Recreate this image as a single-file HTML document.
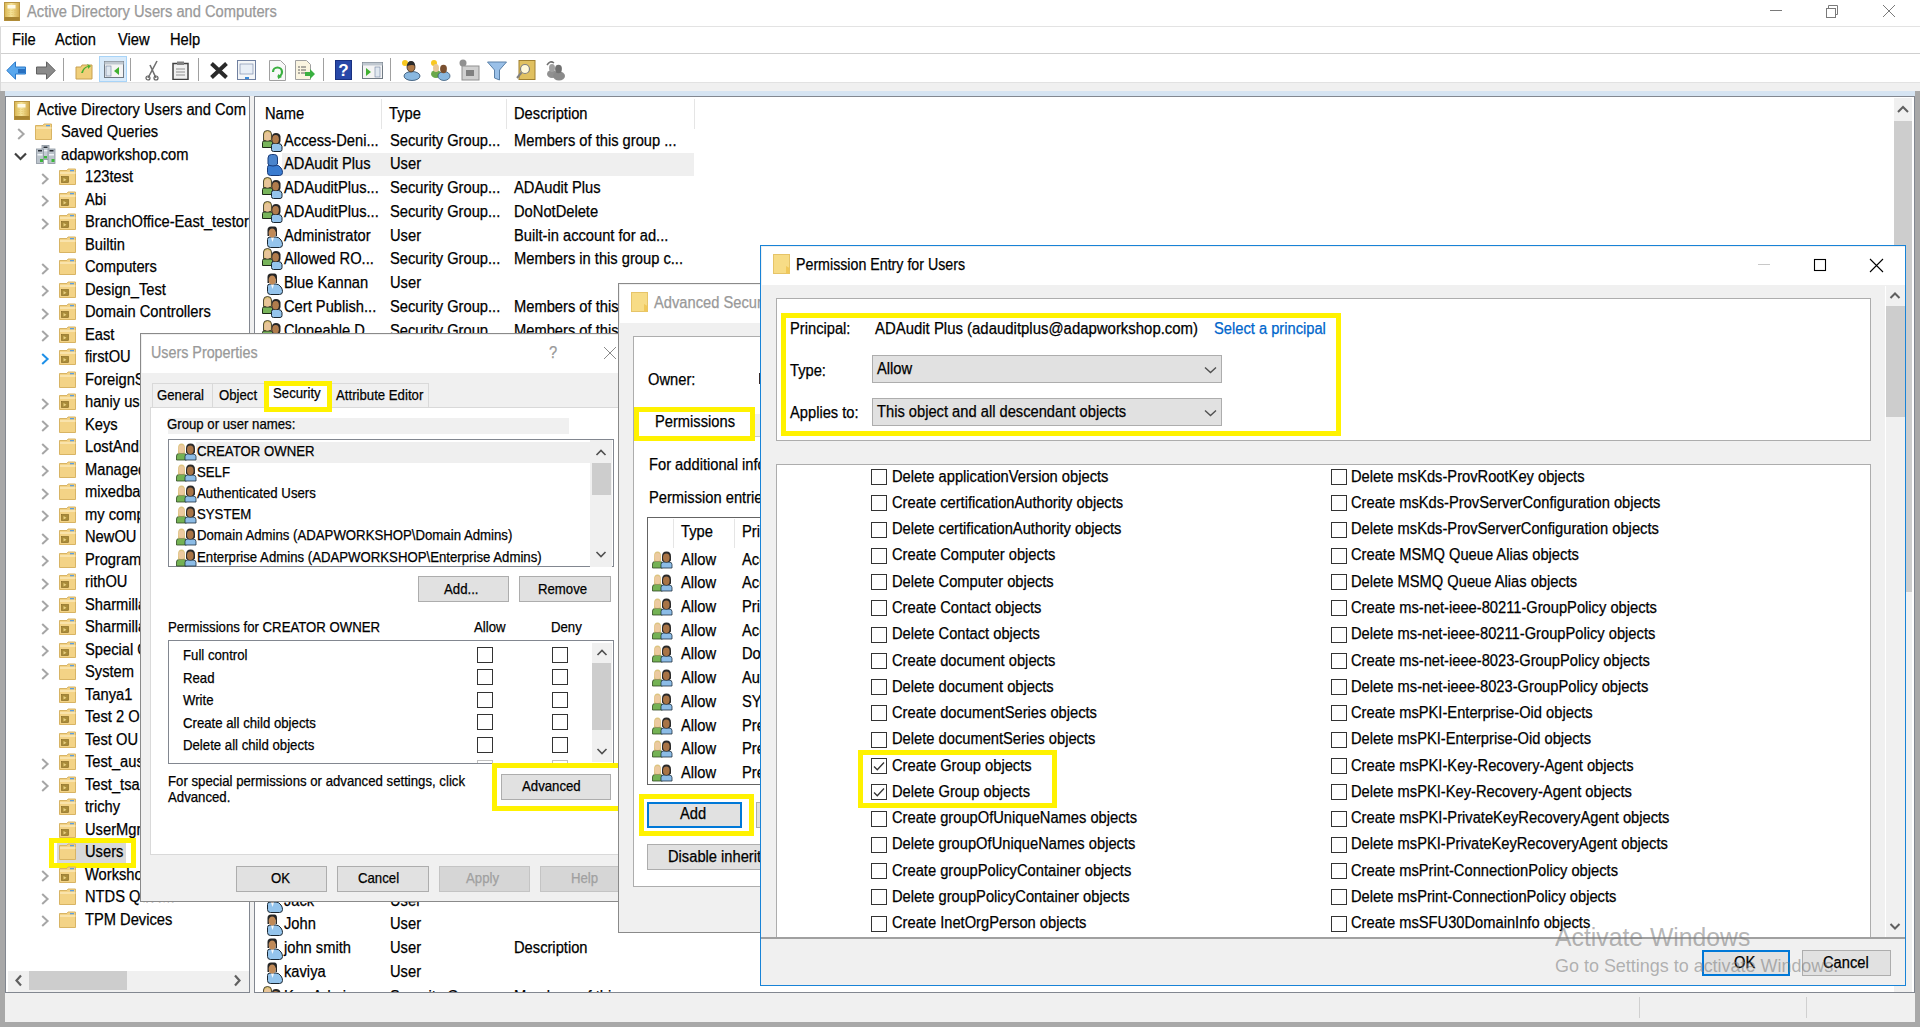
<!DOCTYPE html><html><head><meta charset="utf-8"><style>html,body{margin:0;padding:0;width:1920px;height:1027px;overflow:hidden;background:#fff;position:relative}.t{position:absolute;white-space:nowrap;line-height:20px;height:20px;font-family:"Liberation Sans",sans-serif;transform-origin:0 0;-webkit-text-stroke:0.25px currentColor}svg{display:block}</style></head><body><svg style="position:absolute;left:4px;top:2px;" width="16" height="19" viewBox="0 0 16 19"><defs><linearGradient id="gb" x1="0" x2="1"><stop offset="0" stop-color="#d8b450"/><stop offset="0.45" stop-color="#f6e49a"/><stop offset="1" stop-color="#d0a848"/></linearGradient></defs><rect x="0.5" y="0.5" width="15" height="18" fill="url(#gb)" stroke="#b89440"/><rect x="3.5" y="3" width="8" height="3.5" fill="#fffbe8"/><path d="M5 8v6M8 8v6M11 8v6" stroke="#e0c060" stroke-width="0.8" stroke-dasharray="1 1"/><rect x="0.5" y="15" width="15" height="3.5" fill="#a88430"/></svg><div class="t" style="left:26.70px;top:2.03px;font-size:15.8px;color:#999;transform:scaleX(0.93);">Active Directory Users and Computers</div><div style="position:absolute;left:1770px;top:10px;width:12px;height:1px;background:#7a7a7a"></div><svg style="position:absolute;left:1825px;top:4px;" width="15" height="14" viewBox="0 0 15 14"><rect x="1.5" y="4.5" width="9" height="9" fill="none" stroke="#7a7a7a"/><path d="M3.5 4.5 v-3 h9 v9 h-2" fill="none" stroke="#7a7a7a"/></svg><svg style="position:absolute;left:1882px;top:4px;" width="14" height="14" viewBox="0 0 14 14"><path d="M1 1 L13 13 M13 1 L1 13" stroke="#7a7a7a" stroke-width="1"/></svg><div style="position:absolute;left:0px;top:26px;width:1920px;height:1px;background:#e3e3e3"></div><div style="position:absolute;left:0px;top:27px;width:1px;height:27px;background:#e3e3e3"></div><div class="t" style="left:12.20px;top:30.03px;font-size:15.8px;color:#000;transform:scaleX(0.93);">File</div><div class="t" style="left:54.70px;top:30.03px;font-size:15.8px;color:#000;transform:scaleX(0.93);">Action</div><div class="t" style="left:117.90px;top:30.03px;font-size:15.8px;color:#000;transform:scaleX(0.93);">View</div><div class="t" style="left:169.50px;top:30.03px;font-size:15.8px;color:#000;transform:scaleX(0.93);">Help</div><div style="position:absolute;left:0px;top:53px;width:1920px;height:1px;background:#cfcfcf"></div><div style="position:absolute;left:99px;top:56px;width:28px;height:26px;background:#d8eafa;border:1px solid #a8d4f8;box-sizing:border-box"></div><div style="position:absolute;left:63px;top:58px;width:1px;height:23px;background:#a0a0a0"></div><div style="position:absolute;left:130px;top:58px;width:1px;height:23px;background:#a0a0a0"></div><div style="position:absolute;left:198px;top:58px;width:1px;height:23px;background:#a0a0a0"></div><div style="position:absolute;left:323px;top:58px;width:1px;height:23px;background:#a0a0a0"></div><div style="position:absolute;left:390px;top:58px;width:1px;height:23px;background:#a0a0a0"></div><svg style="position:absolute;left:6px;top:61px;" width="21" height="19" viewBox="0 0 21 19"><path d="M0.8 9.5 L9.5 0.8 V6 H19.5 V13 H9.5 V18.2 Z" fill="#5aa8ee" stroke="#2a78c8" stroke-width="1"/><rect x="12" y="8" width="7" height="4" fill="#2a70c0"/></svg><svg style="position:absolute;left:35px;top:61px;" width="21" height="19" viewBox="0 0 21 19"><path d="M20.2 9.5 L11.5 0.8 V6 H1.5 V13 H11.5 V18.2 Z" fill="#8a8a8a" stroke="#606060" stroke-width="1"/></svg><svg style="position:absolute;left:75px;top:61px;" width="19" height="19" viewBox="0 0 19 19"><path d="M1 6 h5 l1 -2 h10 v14 h-16z" fill="#f0cf7a" stroke="#c8a050"/><path d="M6 12 q2 -6 7 -7 l-1 -2 l4 2 l-3 3 v-2 q-4 1 -5 6z" fill="#4ab030"/></svg><svg style="position:absolute;left:104px;top:61px;" width="20" height="17" viewBox="0 0 20 17"><rect x="0.5" y="0.5" width="19" height="16" fill="#f4f4f4" stroke="#707a84"/><rect x="0.5" y="0.5" width="19" height="3" fill="#c0c8d0"/><rect x="2" y="5" width="5" height="10" fill="#e0e8f0" stroke="#7080a0" stroke-width="0.6"/><path d="M15 6 L10 10 L15 14z" fill="#40b030"/></svg><svg style="position:absolute;left:145px;top:60px;" width="15" height="21" viewBox="0 0 15 21"><path d="M3 18 L12 1 M11 18 L5 5" stroke="#707070" stroke-width="1.6"/><circle cx="3" cy="18" r="2" fill="none" stroke="#606060" stroke-width="1.2"/><circle cx="11" cy="18" r="2" fill="none" stroke="#606060" stroke-width="1.2"/></svg><svg style="position:absolute;left:172px;top:61px;" width="17" height="19" viewBox="0 0 17 19"><rect x="1" y="2.5" width="15" height="16" fill="#f0f0f0" stroke="#404040" stroke-width="1.5"/><rect x="5" y="0.5" width="7" height="3.5" fill="#808080"/><path d="M4 8h9M4 11h9M4 14h9" stroke="#909090"/></svg><svg style="position:absolute;left:209px;top:61px;" width="20" height="19" viewBox="0 0 20 19"><path d="M2.5 2.5 L17.5 16.5 M17.5 2.5 L2.5 16.5" stroke="#2a2a2a" stroke-width="4"/></svg><svg style="position:absolute;left:237px;top:60px;" width="20" height="21" viewBox="0 0 20 21"><rect x="0.5" y="0.5" width="18" height="19" fill="#f4f6f8" stroke="#7080a0"/><rect x="3" y="4" width="13" height="10" fill="#e8eef6" stroke="#8090b0" stroke-width="0.7"/><rect x="8" y="17" width="4" height="2" fill="#3a88d8"/></svg><svg style="position:absolute;left:269px;top:60px;" width="17" height="21" viewBox="0 0 17 21"><path d="M0.5 0.5 h11 l5 5 v15 h-16z" fill="#f8f8f8" stroke="#a0a0a0"/><path d="M4 12 a4.5 4.5 0 1 1 4.5 4.5" fill="none" stroke="#3ab040" stroke-width="2.2"/><path d="M9 14 l4 3 l-4 2z" fill="#3ab040"/></svg><svg style="position:absolute;left:295px;top:60px;" width="21" height="21" viewBox="0 0 21 21"><path d="M0.5 0.5 h11 l4 4 v15 h-15z" fill="#faf4e0" stroke="#a0a0a0"/><path d="M3 7h2M3 10h2M3 13h2M6 7h5M6 10h5M6 13h4" stroke="#606060"/><path d="M10 12 h5 v-3 l5 5 l-5 5 v-3 h-5z" fill="#3ab040"/></svg><svg style="position:absolute;left:335px;top:60px;" width="17" height="20" viewBox="0 0 17 20"><rect x="0.5" y="0.5" width="16" height="19" fill="#2848a8" stroke="#183080"/><text x="8.5" y="16" font-family="Liberation Sans" font-weight="bold" font-size="17" fill="#fff" text-anchor="middle">?</text></svg><svg style="position:absolute;left:362px;top:62px;" width="21" height="17" viewBox="0 0 21 17"><rect x="0.5" y="0.5" width="20" height="16" fill="#f4f4f4" stroke="#707a84"/><rect x="0.5" y="0.5" width="20" height="3" fill="#c0c8d0"/><rect x="13" y="5" width="5" height="10" fill="#e0e8f0" stroke="#7080a0" stroke-width="0.6"/><path d="M4 6 L9 10 L4 14z" fill="#40b030"/></svg><svg style="position:absolute;left:401px;top:59px;" width="20" height="22" viewBox="0 0 20 22"><circle cx="4" cy="4" r="3" fill="#f8c820"/><ellipse cx="11" cy="17" rx="8" ry="4.5" fill="#8ab8e0" stroke="#2a4a6a" stroke-width="0.8"/><ellipse cx="10" cy="8" rx="4" ry="5" fill="#b07a48" stroke="#3a2a1a" stroke-width="0.8"/><path d="M6 7 q0.5 -5 4 -5 q4 0 4 5 q-2 -2 -8 0z" fill="#2a2a2a"/></svg><svg style="position:absolute;left:430px;top:59px;" width="21" height="22" viewBox="0 0 21 22"><circle cx="4" cy="4" r="3" fill="#f8c820"/><ellipse cx="6" cy="15" rx="5" ry="4" fill="#6aa84a"/><ellipse cx="6" cy="9" rx="3" ry="4" fill="#e8c898"/><ellipse cx="14" cy="17" rx="6" ry="4.5" fill="#8ab8e0" stroke="#2a4a6a" stroke-width="0.7"/><ellipse cx="13.5" cy="10" rx="3.4" ry="4.2" fill="#7a5030"/></svg><svg style="position:absolute;left:459px;top:59px;" width="21" height="22" viewBox="0 0 21 22"><circle cx="4" cy="4" r="3.5" fill="#909090"/><rect x="3" y="7" width="17" height="14" fill="#d0d0d0" stroke="#909090"/><rect x="7" y="11" width="8" height="6" fill="#808080"/></svg><svg style="position:absolute;left:487px;top:61px;" width="20" height="20" viewBox="0 0 20 20"><path d="M0.5 1 h19 l-7 8 v10 l-5 -2 v-8z" fill="#9ac0e8" stroke="#5a80a8"/></svg><svg style="position:absolute;left:516px;top:60px;" width="20" height="21" viewBox="0 0 20 21"><rect x="3" y="0.5" width="16" height="19" fill="#e0c060" stroke="#a08030"/><circle cx="9" cy="9" r="4.5" fill="#fff8d8" stroke="#808080" stroke-width="1.2"/><path d="M5.5 12.5 L1 18" stroke="#808080" stroke-width="2"/></svg><svg style="position:absolute;left:545px;top:59px;" width="21" height="22" viewBox="0 0 21 22"><path d="M2 6 q3 -5 7 -2" fill="none" stroke="#707070" stroke-width="1.5"/><ellipse cx="7" cy="15" rx="5" ry="4" fill="#909090"/><ellipse cx="7" cy="9" rx="3" ry="4" fill="#a0a0a0"/><ellipse cx="14" cy="17" rx="6" ry="4.5" fill="#8a8a8a"/><ellipse cx="13.5" cy="10" rx="3.4" ry="4.2" fill="#707070"/></svg><div style="position:absolute;left:0px;top:82px;width:1920px;height:9px;background:#f0f0f0"></div><div style="position:absolute;left:0px;top:82px;width:1920px;height:1px;background:#e2e2e2"></div><div style="position:absolute;left:0px;top:27px;width:1px;height:64px;background:#d9d9d9"></div><div style="position:absolute;left:0px;top:91px;width:1920px;height:5px;background:#d6e4f2"></div><div style="position:absolute;left:0px;top:91px;width:5px;height:936px;background:#a8a8a8"></div><div style="position:absolute;left:1915px;top:91px;width:5px;height:936px;background:#a8a8a8"></div><div style="position:absolute;left:0px;top:1022px;width:1920px;height:5px;background:#a8a8a8"></div><div style="position:absolute;left:5px;top:96px;width:1910px;height:926px;background:#f0f0f0"></div><div style="position:absolute;left:1639px;top:997px;width:1px;height:21px;background:#d0d0d0"></div><div style="position:absolute;left:1806px;top:997px;width:1px;height:21px;background:#d0d0d0"></div><div style="position:absolute;left:5px;top:96px;width:245px;height:897px;overflow:hidden;background:#fff;border:1px solid #828790;box-sizing:border-box"><svg style="position:absolute;left:8px;top:4px;" width="16" height="19" viewBox="0 0 16 19"><defs><linearGradient id="gb" x1="0" x2="1"><stop offset="0" stop-color="#d8b450"/><stop offset="0.45" stop-color="#f6e49a"/><stop offset="1" stop-color="#d0a848"/></linearGradient></defs><rect x="0.5" y="0.5" width="15" height="18" fill="url(#gb)" stroke="#b89440"/><rect x="3.5" y="3" width="8" height="3.5" fill="#fffbe8"/><path d="M5 8v6M8 8v6M11 8v6" stroke="#e0c060" stroke-width="0.8" stroke-dasharray="1 1"/><rect x="0.5" y="15" width="15" height="3.5" fill="#a88430"/></svg><div class="t" style="left:31.20px;top:2.73px;font-size:15.8px;color:#000;transform:scaleX(0.93);">Active Directory Users and Com</div><svg style="position:absolute;left:10.5px;top:30.69999999999999px;" width="9" height="12" viewBox="0 0 9 12"><path d="M1.2 1 L6.6 6 L1.2 11" fill="none" stroke="#a6a6a6" stroke-width="2"/></svg><svg style="position:absolute;left:29px;top:26.19999999999999px;" width="17" height="17" viewBox="0 0 17 17"><path d="M0.5 2.5 h7.5 l1 -1.5 h7.5 v15.5 h-16 z" fill="#f3d386" stroke="#d8b464" stroke-width="1"/><path d="M1 5 h15.5" stroke="#fbe9b8" stroke-width="1.5"/><rect x="11" y="2" width="4" height="1.3" fill="#5c9ee0"/></svg><div class="t" style="left:54.70px;top:25.23px;font-size:15.8px;color:#000;transform:scaleX(0.93);">Saved Queries</div><svg style="position:absolute;left:8.0px;top:54.69999999999999px;" width="13" height="9" viewBox="0 0 13 9"><path d="M1 1.5 L6.5 7 L12 1.5" fill="none" stroke="#404040" stroke-width="2.2"/></svg><svg style="position:absolute;left:30px;top:47.69999999999999px;" width="20" height="19" viewBox="0 0 20 19"><rect x="6" y="0.5" width="7" height="14" fill="#c4ccd4" stroke="#8a949e" stroke-width="0.8"/><rect x="7.5" y="1.5" width="4" height="1.5" fill="#2a3038"/><rect x="7" y="5" width="5" height="1.3" fill="#f0f4f8"/><rect x="0.5" y="4" width="7" height="14.5" fill="#bcc4cc" stroke="#8a949e" stroke-width="0.8"/><rect x="12" y="4" width="7" height="14.5" fill="#bcc4cc" stroke="#8a949e" stroke-width="0.8"/><rect x="2" y="5" width="4" height="1.5" fill="#2a3038"/><rect x="13.5" y="5" width="4" height="1.5" fill="#2a3038"/><rect x="1.5" y="9" width="5" height="1.5" fill="#f0f4f8"/><rect x="13" y="9" width="5" height="1.5" fill="#f0f4f8"/><rect x="4" y="14" width="3" height="3" fill="#3cb83c"/><rect x="15.5" y="14" width="3" height="3" fill="#3cb83c"/><rect x="8" y="11" width="3" height="2.5" fill="#3cb83c"/></svg><div class="t" style="left:54.70px;top:47.73px;font-size:15.8px;color:#000;transform:scaleX(0.93);">adapworkshop.com</div><svg style="position:absolute;left:34.5px;top:75.69999999999999px;" width="9" height="12" viewBox="0 0 9 12"><path d="M1.2 1 L6.6 6 L1.2 11" fill="none" stroke="#a6a6a6" stroke-width="2"/></svg><svg style="position:absolute;left:53px;top:71.19999999999999px;" width="17" height="17" viewBox="0 0 17 17"><path d="M0.5 2.5 h7.5 l1 -1.5 h7.5 v15.5 h-16 z" fill="#f3d386" stroke="#d8b464" stroke-width="1"/><path d="M1 5 h15.5" stroke="#fbe9b8" stroke-width="1.5"/><rect x="11" y="2" width="4" height="1.3" fill="#5c9ee0"/><rect x="2.5" y="8.5" width="7" height="6" fill="#a88a38" stroke="#806420" stroke-width="0.6"/><path d="M4.5 10 l3 1.8 l-3 1.8z" fill="#e8d080"/></svg><div class="t" style="left:78.70px;top:70.23px;font-size:15.8px;color:#000;transform:scaleX(0.93);">123test</div><svg style="position:absolute;left:34.5px;top:98.19999999999999px;" width="9" height="12" viewBox="0 0 9 12"><path d="M1.2 1 L6.6 6 L1.2 11" fill="none" stroke="#a6a6a6" stroke-width="2"/></svg><svg style="position:absolute;left:53px;top:93.69999999999999px;" width="17" height="17" viewBox="0 0 17 17"><path d="M0.5 2.5 h7.5 l1 -1.5 h7.5 v15.5 h-16 z" fill="#f3d386" stroke="#d8b464" stroke-width="1"/><path d="M1 5 h15.5" stroke="#fbe9b8" stroke-width="1.5"/><rect x="11" y="2" width="4" height="1.3" fill="#5c9ee0"/><rect x="2.5" y="8.5" width="7" height="6" fill="#a88a38" stroke="#806420" stroke-width="0.6"/><path d="M4.5 10 l3 1.8 l-3 1.8z" fill="#e8d080"/></svg><div class="t" style="left:78.70px;top:92.73px;font-size:15.8px;color:#000;transform:scaleX(0.93);">Abi</div><svg style="position:absolute;left:34.5px;top:120.69999999999999px;" width="9" height="12" viewBox="0 0 9 12"><path d="M1.2 1 L6.6 6 L1.2 11" fill="none" stroke="#a6a6a6" stroke-width="2"/></svg><svg style="position:absolute;left:53px;top:116.19999999999999px;" width="17" height="17" viewBox="0 0 17 17"><path d="M0.5 2.5 h7.5 l1 -1.5 h7.5 v15.5 h-16 z" fill="#f3d386" stroke="#d8b464" stroke-width="1"/><path d="M1 5 h15.5" stroke="#fbe9b8" stroke-width="1.5"/><rect x="11" y="2" width="4" height="1.3" fill="#5c9ee0"/><rect x="2.5" y="8.5" width="7" height="6" fill="#a88a38" stroke="#806420" stroke-width="0.6"/><path d="M4.5 10 l3 1.8 l-3 1.8z" fill="#e8d080"/></svg><div class="t" style="left:78.70px;top:115.23px;font-size:15.8px;color:#000;transform:scaleX(0.93);">BranchOffice-East_testor</div><svg style="position:absolute;left:53px;top:138.7px;" width="17" height="17" viewBox="0 0 17 17"><path d="M0.5 2.5 h7.5 l1 -1.5 h7.5 v15.5 h-16 z" fill="#f3d386" stroke="#d8b464" stroke-width="1"/><path d="M1 5 h15.5" stroke="#fbe9b8" stroke-width="1.5"/><rect x="11" y="2" width="4" height="1.3" fill="#5c9ee0"/></svg><div class="t" style="left:78.70px;top:137.73px;font-size:15.8px;color:#000;transform:scaleX(0.93);">Builtin</div><svg style="position:absolute;left:34.5px;top:165.7px;" width="9" height="12" viewBox="0 0 9 12"><path d="M1.2 1 L6.6 6 L1.2 11" fill="none" stroke="#a6a6a6" stroke-width="2"/></svg><svg style="position:absolute;left:53px;top:161.2px;" width="17" height="17" viewBox="0 0 17 17"><path d="M0.5 2.5 h7.5 l1 -1.5 h7.5 v15.5 h-16 z" fill="#f3d386" stroke="#d8b464" stroke-width="1"/><path d="M1 5 h15.5" stroke="#fbe9b8" stroke-width="1.5"/><rect x="11" y="2" width="4" height="1.3" fill="#5c9ee0"/></svg><div class="t" style="left:78.70px;top:160.23px;font-size:15.8px;color:#000;transform:scaleX(0.93);">Computers</div><svg style="position:absolute;left:34.5px;top:188.2px;" width="9" height="12" viewBox="0 0 9 12"><path d="M1.2 1 L6.6 6 L1.2 11" fill="none" stroke="#a6a6a6" stroke-width="2"/></svg><svg style="position:absolute;left:53px;top:183.7px;" width="17" height="17" viewBox="0 0 17 17"><path d="M0.5 2.5 h7.5 l1 -1.5 h7.5 v15.5 h-16 z" fill="#f3d386" stroke="#d8b464" stroke-width="1"/><path d="M1 5 h15.5" stroke="#fbe9b8" stroke-width="1.5"/><rect x="11" y="2" width="4" height="1.3" fill="#5c9ee0"/><rect x="2.5" y="8.5" width="7" height="6" fill="#a88a38" stroke="#806420" stroke-width="0.6"/><path d="M4.5 10 l3 1.8 l-3 1.8z" fill="#e8d080"/></svg><div class="t" style="left:78.70px;top:182.73px;font-size:15.8px;color:#000;transform:scaleX(0.93);">Design_Test</div><svg style="position:absolute;left:34.5px;top:210.7px;" width="9" height="12" viewBox="0 0 9 12"><path d="M1.2 1 L6.6 6 L1.2 11" fill="none" stroke="#a6a6a6" stroke-width="2"/></svg><svg style="position:absolute;left:53px;top:206.2px;" width="17" height="17" viewBox="0 0 17 17"><path d="M0.5 2.5 h7.5 l1 -1.5 h7.5 v15.5 h-16 z" fill="#f3d386" stroke="#d8b464" stroke-width="1"/><path d="M1 5 h15.5" stroke="#fbe9b8" stroke-width="1.5"/><rect x="11" y="2" width="4" height="1.3" fill="#5c9ee0"/><rect x="2.5" y="8.5" width="7" height="6" fill="#a88a38" stroke="#806420" stroke-width="0.6"/><path d="M4.5 10 l3 1.8 l-3 1.8z" fill="#e8d080"/></svg><div class="t" style="left:78.70px;top:205.23px;font-size:15.8px;color:#000;transform:scaleX(0.93);">Domain Controllers</div><svg style="position:absolute;left:34.5px;top:233.2px;" width="9" height="12" viewBox="0 0 9 12"><path d="M1.2 1 L6.6 6 L1.2 11" fill="none" stroke="#a6a6a6" stroke-width="2"/></svg><svg style="position:absolute;left:53px;top:228.7px;" width="17" height="17" viewBox="0 0 17 17"><path d="M0.5 2.5 h7.5 l1 -1.5 h7.5 v15.5 h-16 z" fill="#f3d386" stroke="#d8b464" stroke-width="1"/><path d="M1 5 h15.5" stroke="#fbe9b8" stroke-width="1.5"/><rect x="11" y="2" width="4" height="1.3" fill="#5c9ee0"/><rect x="2.5" y="8.5" width="7" height="6" fill="#a88a38" stroke="#806420" stroke-width="0.6"/><path d="M4.5 10 l3 1.8 l-3 1.8z" fill="#e8d080"/></svg><div class="t" style="left:78.70px;top:227.73px;font-size:15.8px;color:#000;transform:scaleX(0.93);">East</div><svg style="position:absolute;left:34.5px;top:255.7px;" width="9" height="12" viewBox="0 0 9 12"><path d="M1.2 1 L6.6 6 L1.2 11" fill="none" stroke="#1e90e8" stroke-width="2"/></svg><svg style="position:absolute;left:53px;top:251.2px;" width="17" height="17" viewBox="0 0 17 17"><path d="M0.5 2.5 h7.5 l1 -1.5 h7.5 v15.5 h-16 z" fill="#f3d386" stroke="#d8b464" stroke-width="1"/><path d="M1 5 h15.5" stroke="#fbe9b8" stroke-width="1.5"/><rect x="11" y="2" width="4" height="1.3" fill="#5c9ee0"/><rect x="2.5" y="8.5" width="7" height="6" fill="#a88a38" stroke="#806420" stroke-width="0.6"/><path d="M4.5 10 l3 1.8 l-3 1.8z" fill="#e8d080"/></svg><div class="t" style="left:78.70px;top:250.23px;font-size:15.8px;color:#000;transform:scaleX(0.93);">firstOU</div><svg style="position:absolute;left:53px;top:273.7px;" width="17" height="17" viewBox="0 0 17 17"><path d="M0.5 2.5 h7.5 l1 -1.5 h7.5 v15.5 h-16 z" fill="#f3d386" stroke="#d8b464" stroke-width="1"/><path d="M1 5 h15.5" stroke="#fbe9b8" stroke-width="1.5"/><rect x="11" y="2" width="4" height="1.3" fill="#5c9ee0"/></svg><div class="t" style="left:78.70px;top:272.73px;font-size:15.8px;color:#000;transform:scaleX(0.93);">ForeignSecurityPrincipals</div><svg style="position:absolute;left:34.5px;top:300.7px;" width="9" height="12" viewBox="0 0 9 12"><path d="M1.2 1 L6.6 6 L1.2 11" fill="none" stroke="#a6a6a6" stroke-width="2"/></svg><svg style="position:absolute;left:53px;top:296.2px;" width="17" height="17" viewBox="0 0 17 17"><path d="M0.5 2.5 h7.5 l1 -1.5 h7.5 v15.5 h-16 z" fill="#f3d386" stroke="#d8b464" stroke-width="1"/><path d="M1 5 h15.5" stroke="#fbe9b8" stroke-width="1.5"/><rect x="11" y="2" width="4" height="1.3" fill="#5c9ee0"/><rect x="2.5" y="8.5" width="7" height="6" fill="#a88a38" stroke="#806420" stroke-width="0.6"/><path d="M4.5 10 l3 1.8 l-3 1.8z" fill="#e8d080"/></svg><div class="t" style="left:78.70px;top:295.23px;font-size:15.8px;color:#000;transform:scaleX(0.93);">haniy users</div><svg style="position:absolute;left:34.5px;top:323.2px;" width="9" height="12" viewBox="0 0 9 12"><path d="M1.2 1 L6.6 6 L1.2 11" fill="none" stroke="#a6a6a6" stroke-width="2"/></svg><svg style="position:absolute;left:53px;top:318.7px;" width="17" height="17" viewBox="0 0 17 17"><path d="M0.5 2.5 h7.5 l1 -1.5 h7.5 v15.5 h-16 z" fill="#f3d386" stroke="#d8b464" stroke-width="1"/><path d="M1 5 h15.5" stroke="#fbe9b8" stroke-width="1.5"/><rect x="11" y="2" width="4" height="1.3" fill="#5c9ee0"/></svg><div class="t" style="left:78.70px;top:317.73px;font-size:15.8px;color:#000;transform:scaleX(0.93);">Keys</div><svg style="position:absolute;left:34.5px;top:345.7px;" width="9" height="12" viewBox="0 0 9 12"><path d="M1.2 1 L6.6 6 L1.2 11" fill="none" stroke="#a6a6a6" stroke-width="2"/></svg><svg style="position:absolute;left:53px;top:341.2px;" width="17" height="17" viewBox="0 0 17 17"><path d="M0.5 2.5 h7.5 l1 -1.5 h7.5 v15.5 h-16 z" fill="#f3d386" stroke="#d8b464" stroke-width="1"/><path d="M1 5 h15.5" stroke="#fbe9b8" stroke-width="1.5"/><rect x="11" y="2" width="4" height="1.3" fill="#5c9ee0"/></svg><div class="t" style="left:78.70px;top:340.23px;font-size:15.8px;color:#000;transform:scaleX(0.93);">LostAndFound</div><svg style="position:absolute;left:34.5px;top:368.2px;" width="9" height="12" viewBox="0 0 9 12"><path d="M1.2 1 L6.6 6 L1.2 11" fill="none" stroke="#a6a6a6" stroke-width="2"/></svg><svg style="position:absolute;left:53px;top:363.7px;" width="17" height="17" viewBox="0 0 17 17"><path d="M0.5 2.5 h7.5 l1 -1.5 h7.5 v15.5 h-16 z" fill="#f3d386" stroke="#d8b464" stroke-width="1"/><path d="M1 5 h15.5" stroke="#fbe9b8" stroke-width="1.5"/><rect x="11" y="2" width="4" height="1.3" fill="#5c9ee0"/></svg><div class="t" style="left:78.70px;top:362.73px;font-size:15.8px;color:#000;transform:scaleX(0.93);">Managed Service Accounts</div><svg style="position:absolute;left:34.5px;top:390.7px;" width="9" height="12" viewBox="0 0 9 12"><path d="M1.2 1 L6.6 6 L1.2 11" fill="none" stroke="#a6a6a6" stroke-width="2"/></svg><svg style="position:absolute;left:53px;top:386.2px;" width="17" height="17" viewBox="0 0 17 17"><path d="M0.5 2.5 h7.5 l1 -1.5 h7.5 v15.5 h-16 z" fill="#f3d386" stroke="#d8b464" stroke-width="1"/><path d="M1 5 h15.5" stroke="#fbe9b8" stroke-width="1.5"/><rect x="11" y="2" width="4" height="1.3" fill="#5c9ee0"/></svg><div class="t" style="left:78.70px;top:385.23px;font-size:15.8px;color:#000;transform:scaleX(0.93);">mixedbag</div><svg style="position:absolute;left:34.5px;top:413.20000000000005px;" width="9" height="12" viewBox="0 0 9 12"><path d="M1.2 1 L6.6 6 L1.2 11" fill="none" stroke="#a6a6a6" stroke-width="2"/></svg><svg style="position:absolute;left:53px;top:408.70000000000005px;" width="17" height="17" viewBox="0 0 17 17"><path d="M0.5 2.5 h7.5 l1 -1.5 h7.5 v15.5 h-16 z" fill="#f3d386" stroke="#d8b464" stroke-width="1"/><path d="M1 5 h15.5" stroke="#fbe9b8" stroke-width="1.5"/><rect x="11" y="2" width="4" height="1.3" fill="#5c9ee0"/><rect x="2.5" y="8.5" width="7" height="6" fill="#a88a38" stroke="#806420" stroke-width="0.6"/><path d="M4.5 10 l3 1.8 l-3 1.8z" fill="#e8d080"/></svg><div class="t" style="left:78.70px;top:407.73px;font-size:15.8px;color:#000;transform:scaleX(0.93);">my computers</div><svg style="position:absolute;left:34.5px;top:435.70000000000005px;" width="9" height="12" viewBox="0 0 9 12"><path d="M1.2 1 L6.6 6 L1.2 11" fill="none" stroke="#a6a6a6" stroke-width="2"/></svg><svg style="position:absolute;left:53px;top:431.20000000000005px;" width="17" height="17" viewBox="0 0 17 17"><path d="M0.5 2.5 h7.5 l1 -1.5 h7.5 v15.5 h-16 z" fill="#f3d386" stroke="#d8b464" stroke-width="1"/><path d="M1 5 h15.5" stroke="#fbe9b8" stroke-width="1.5"/><rect x="11" y="2" width="4" height="1.3" fill="#5c9ee0"/><rect x="2.5" y="8.5" width="7" height="6" fill="#a88a38" stroke="#806420" stroke-width="0.6"/><path d="M4.5 10 l3 1.8 l-3 1.8z" fill="#e8d080"/></svg><div class="t" style="left:78.70px;top:430.23px;font-size:15.8px;color:#000;transform:scaleX(0.93);">NewOU</div><svg style="position:absolute;left:34.5px;top:458.20000000000005px;" width="9" height="12" viewBox="0 0 9 12"><path d="M1.2 1 L6.6 6 L1.2 11" fill="none" stroke="#a6a6a6" stroke-width="2"/></svg><svg style="position:absolute;left:53px;top:453.70000000000005px;" width="17" height="17" viewBox="0 0 17 17"><path d="M0.5 2.5 h7.5 l1 -1.5 h7.5 v15.5 h-16 z" fill="#f3d386" stroke="#d8b464" stroke-width="1"/><path d="M1 5 h15.5" stroke="#fbe9b8" stroke-width="1.5"/><rect x="11" y="2" width="4" height="1.3" fill="#5c9ee0"/></svg><div class="t" style="left:78.70px;top:452.73px;font-size:15.8px;color:#000;transform:scaleX(0.93);">Program Data</div><svg style="position:absolute;left:34.5px;top:480.70000000000005px;" width="9" height="12" viewBox="0 0 9 12"><path d="M1.2 1 L6.6 6 L1.2 11" fill="none" stroke="#a6a6a6" stroke-width="2"/></svg><svg style="position:absolute;left:53px;top:476.20000000000005px;" width="17" height="17" viewBox="0 0 17 17"><path d="M0.5 2.5 h7.5 l1 -1.5 h7.5 v15.5 h-16 z" fill="#f3d386" stroke="#d8b464" stroke-width="1"/><path d="M1 5 h15.5" stroke="#fbe9b8" stroke-width="1.5"/><rect x="11" y="2" width="4" height="1.3" fill="#5c9ee0"/><rect x="2.5" y="8.5" width="7" height="6" fill="#a88a38" stroke="#806420" stroke-width="0.6"/><path d="M4.5 10 l3 1.8 l-3 1.8z" fill="#e8d080"/></svg><div class="t" style="left:78.70px;top:475.23px;font-size:15.8px;color:#000;transform:scaleX(0.93);">rithOU</div><svg style="position:absolute;left:34.5px;top:503.20000000000005px;" width="9" height="12" viewBox="0 0 9 12"><path d="M1.2 1 L6.6 6 L1.2 11" fill="none" stroke="#a6a6a6" stroke-width="2"/></svg><svg style="position:absolute;left:53px;top:498.70000000000005px;" width="17" height="17" viewBox="0 0 17 17"><path d="M0.5 2.5 h7.5 l1 -1.5 h7.5 v15.5 h-16 z" fill="#f3d386" stroke="#d8b464" stroke-width="1"/><path d="M1 5 h15.5" stroke="#fbe9b8" stroke-width="1.5"/><rect x="11" y="2" width="4" height="1.3" fill="#5c9ee0"/><rect x="2.5" y="8.5" width="7" height="6" fill="#a88a38" stroke="#806420" stroke-width="0.6"/><path d="M4.5 10 l3 1.8 l-3 1.8z" fill="#e8d080"/></svg><div class="t" style="left:78.70px;top:497.73px;font-size:15.8px;color:#000;transform:scaleX(0.93);">Sharmilla</div><svg style="position:absolute;left:34.5px;top:525.7px;" width="9" height="12" viewBox="0 0 9 12"><path d="M1.2 1 L6.6 6 L1.2 11" fill="none" stroke="#a6a6a6" stroke-width="2"/></svg><svg style="position:absolute;left:53px;top:521.2px;" width="17" height="17" viewBox="0 0 17 17"><path d="M0.5 2.5 h7.5 l1 -1.5 h7.5 v15.5 h-16 z" fill="#f3d386" stroke="#d8b464" stroke-width="1"/><path d="M1 5 h15.5" stroke="#fbe9b8" stroke-width="1.5"/><rect x="11" y="2" width="4" height="1.3" fill="#5c9ee0"/><rect x="2.5" y="8.5" width="7" height="6" fill="#a88a38" stroke="#806420" stroke-width="0.6"/><path d="M4.5 10 l3 1.8 l-3 1.8z" fill="#e8d080"/></svg><div class="t" style="left:78.70px;top:520.23px;font-size:15.8px;color:#000;transform:scaleX(0.93);">Sharmilla2</div><svg style="position:absolute;left:34.5px;top:548.2px;" width="9" height="12" viewBox="0 0 9 12"><path d="M1.2 1 L6.6 6 L1.2 11" fill="none" stroke="#a6a6a6" stroke-width="2"/></svg><svg style="position:absolute;left:53px;top:543.7px;" width="17" height="17" viewBox="0 0 17 17"><path d="M0.5 2.5 h7.5 l1 -1.5 h7.5 v15.5 h-16 z" fill="#f3d386" stroke="#d8b464" stroke-width="1"/><path d="M1 5 h15.5" stroke="#fbe9b8" stroke-width="1.5"/><rect x="11" y="2" width="4" height="1.3" fill="#5c9ee0"/><rect x="2.5" y="8.5" width="7" height="6" fill="#a88a38" stroke="#806420" stroke-width="0.6"/><path d="M4.5 10 l3 1.8 l-3 1.8z" fill="#e8d080"/></svg><div class="t" style="left:78.70px;top:542.73px;font-size:15.8px;color:#000;transform:scaleX(0.93);">Special OU</div><svg style="position:absolute;left:34.5px;top:570.7px;" width="9" height="12" viewBox="0 0 9 12"><path d="M1.2 1 L6.6 6 L1.2 11" fill="none" stroke="#a6a6a6" stroke-width="2"/></svg><svg style="position:absolute;left:53px;top:566.2px;" width="17" height="17" viewBox="0 0 17 17"><path d="M0.5 2.5 h7.5 l1 -1.5 h7.5 v15.5 h-16 z" fill="#f3d386" stroke="#d8b464" stroke-width="1"/><path d="M1 5 h15.5" stroke="#fbe9b8" stroke-width="1.5"/><rect x="11" y="2" width="4" height="1.3" fill="#5c9ee0"/></svg><div class="t" style="left:78.70px;top:565.23px;font-size:15.8px;color:#000;transform:scaleX(0.93);">System</div><svg style="position:absolute;left:53px;top:588.7px;" width="17" height="17" viewBox="0 0 17 17"><path d="M0.5 2.5 h7.5 l1 -1.5 h7.5 v15.5 h-16 z" fill="#f3d386" stroke="#d8b464" stroke-width="1"/><path d="M1 5 h15.5" stroke="#fbe9b8" stroke-width="1.5"/><rect x="11" y="2" width="4" height="1.3" fill="#5c9ee0"/><rect x="2.5" y="8.5" width="7" height="6" fill="#a88a38" stroke="#806420" stroke-width="0.6"/><path d="M4.5 10 l3 1.8 l-3 1.8z" fill="#e8d080"/></svg><div class="t" style="left:78.70px;top:587.73px;font-size:15.8px;color:#000;transform:scaleX(0.93);">Tanya1</div><svg style="position:absolute;left:53px;top:611.2px;" width="17" height="17" viewBox="0 0 17 17"><path d="M0.5 2.5 h7.5 l1 -1.5 h7.5 v15.5 h-16 z" fill="#f3d386" stroke="#d8b464" stroke-width="1"/><path d="M1 5 h15.5" stroke="#fbe9b8" stroke-width="1.5"/><rect x="11" y="2" width="4" height="1.3" fill="#5c9ee0"/><rect x="2.5" y="8.5" width="7" height="6" fill="#a88a38" stroke="#806420" stroke-width="0.6"/><path d="M4.5 10 l3 1.8 l-3 1.8z" fill="#e8d080"/></svg><div class="t" style="left:78.70px;top:610.23px;font-size:15.8px;color:#000;transform:scaleX(0.93);">Test 2 OU</div><svg style="position:absolute;left:53px;top:633.7px;" width="17" height="17" viewBox="0 0 17 17"><path d="M0.5 2.5 h7.5 l1 -1.5 h7.5 v15.5 h-16 z" fill="#f3d386" stroke="#d8b464" stroke-width="1"/><path d="M1 5 h15.5" stroke="#fbe9b8" stroke-width="1.5"/><rect x="11" y="2" width="4" height="1.3" fill="#5c9ee0"/><rect x="2.5" y="8.5" width="7" height="6" fill="#a88a38" stroke="#806420" stroke-width="0.6"/><path d="M4.5 10 l3 1.8 l-3 1.8z" fill="#e8d080"/></svg><div class="t" style="left:78.70px;top:632.73px;font-size:15.8px;color:#000;transform:scaleX(0.93);">Test OU</div><svg style="position:absolute;left:34.5px;top:660.7px;" width="9" height="12" viewBox="0 0 9 12"><path d="M1.2 1 L6.6 6 L1.2 11" fill="none" stroke="#a6a6a6" stroke-width="2"/></svg><svg style="position:absolute;left:53px;top:656.2px;" width="17" height="17" viewBox="0 0 17 17"><path d="M0.5 2.5 h7.5 l1 -1.5 h7.5 v15.5 h-16 z" fill="#f3d386" stroke="#d8b464" stroke-width="1"/><path d="M1 5 h15.5" stroke="#fbe9b8" stroke-width="1.5"/><rect x="11" y="2" width="4" height="1.3" fill="#5c9ee0"/><rect x="2.5" y="8.5" width="7" height="6" fill="#a88a38" stroke="#806420" stroke-width="0.6"/><path d="M4.5 10 l3 1.8 l-3 1.8z" fill="#e8d080"/></svg><div class="t" style="left:78.70px;top:655.23px;font-size:15.8px;color:#000;transform:scaleX(0.93);">Test_aus</div><svg style="position:absolute;left:34.5px;top:683.2px;" width="9" height="12" viewBox="0 0 9 12"><path d="M1.2 1 L6.6 6 L1.2 11" fill="none" stroke="#a6a6a6" stroke-width="2"/></svg><svg style="position:absolute;left:53px;top:678.7px;" width="17" height="17" viewBox="0 0 17 17"><path d="M0.5 2.5 h7.5 l1 -1.5 h7.5 v15.5 h-16 z" fill="#f3d386" stroke="#d8b464" stroke-width="1"/><path d="M1 5 h15.5" stroke="#fbe9b8" stroke-width="1.5"/><rect x="11" y="2" width="4" height="1.3" fill="#5c9ee0"/><rect x="2.5" y="8.5" width="7" height="6" fill="#a88a38" stroke="#806420" stroke-width="0.6"/><path d="M4.5 10 l3 1.8 l-3 1.8z" fill="#e8d080"/></svg><div class="t" style="left:78.70px;top:677.73px;font-size:15.8px;color:#000;transform:scaleX(0.93);">Test_tsa</div><svg style="position:absolute;left:53px;top:701.2px;" width="17" height="17" viewBox="0 0 17 17"><path d="M0.5 2.5 h7.5 l1 -1.5 h7.5 v15.5 h-16 z" fill="#f3d386" stroke="#d8b464" stroke-width="1"/><path d="M1 5 h15.5" stroke="#fbe9b8" stroke-width="1.5"/><rect x="11" y="2" width="4" height="1.3" fill="#5c9ee0"/><rect x="2.5" y="8.5" width="7" height="6" fill="#a88a38" stroke="#806420" stroke-width="0.6"/><path d="M4.5 10 l3 1.8 l-3 1.8z" fill="#e8d080"/></svg><div class="t" style="left:78.70px;top:700.23px;font-size:15.8px;color:#000;transform:scaleX(0.93);">trichy</div><svg style="position:absolute;left:53px;top:723.7px;" width="17" height="17" viewBox="0 0 17 17"><path d="M0.5 2.5 h7.5 l1 -1.5 h7.5 v15.5 h-16 z" fill="#f3d386" stroke="#d8b464" stroke-width="1"/><path d="M1 5 h15.5" stroke="#fbe9b8" stroke-width="1.5"/><rect x="11" y="2" width="4" height="1.3" fill="#5c9ee0"/><rect x="2.5" y="8.5" width="7" height="6" fill="#a88a38" stroke="#806420" stroke-width="0.6"/><path d="M4.5 10 l3 1.8 l-3 1.8z" fill="#e8d080"/></svg><div class="t" style="left:78.70px;top:722.73px;font-size:15.8px;color:#000;transform:scaleX(0.93);">UserMgmt</div><div style="position:absolute;left:43px;top:741px;width:87px;height:30px;background:#fff200"></div><div style="position:absolute;left:48px;top:746px;width:77px;height:20px;background:#fff"></div><div style="position:absolute;left:51px;top:746px;width:69px;height:20px;background:#d9d9d9"></div><svg style="position:absolute;left:53px;top:746.2px;" width="17" height="17" viewBox="0 0 17 17"><path d="M0.5 2.5 h7.5 l1 -1.5 h7.5 v15.5 h-16 z" fill="#f3d386" stroke="#d8b464" stroke-width="1"/><path d="M1 5 h15.5" stroke="#fbe9b8" stroke-width="1.5"/><rect x="11" y="2" width="4" height="1.3" fill="#5c9ee0"/></svg><div class="t" style="left:78.70px;top:745.23px;font-size:15.8px;color:#000;transform:scaleX(0.93);">Users</div><svg style="position:absolute;left:34.5px;top:773.2px;" width="9" height="12" viewBox="0 0 9 12"><path d="M1.2 1 L6.6 6 L1.2 11" fill="none" stroke="#a6a6a6" stroke-width="2"/></svg><svg style="position:absolute;left:53px;top:768.7px;" width="17" height="17" viewBox="0 0 17 17"><path d="M0.5 2.5 h7.5 l1 -1.5 h7.5 v15.5 h-16 z" fill="#f3d386" stroke="#d8b464" stroke-width="1"/><path d="M1 5 h15.5" stroke="#fbe9b8" stroke-width="1.5"/><rect x="11" y="2" width="4" height="1.3" fill="#5c9ee0"/><rect x="2.5" y="8.5" width="7" height="6" fill="#a88a38" stroke="#806420" stroke-width="0.6"/><path d="M4.5 10 l3 1.8 l-3 1.8z" fill="#e8d080"/></svg><div class="t" style="left:78.70px;top:767.73px;font-size:15.8px;color:#000;transform:scaleX(0.93);">Workshop</div><svg style="position:absolute;left:34.5px;top:795.7px;" width="9" height="12" viewBox="0 0 9 12"><path d="M1.2 1 L6.6 6 L1.2 11" fill="none" stroke="#a6a6a6" stroke-width="2"/></svg><svg style="position:absolute;left:53px;top:791.2px;" width="17" height="17" viewBox="0 0 17 17"><path d="M0.5 2.5 h7.5 l1 -1.5 h7.5 v15.5 h-16 z" fill="#f3d386" stroke="#d8b464" stroke-width="1"/><path d="M1 5 h15.5" stroke="#fbe9b8" stroke-width="1.5"/><rect x="11" y="2" width="4" height="1.3" fill="#5c9ee0"/></svg><div class="t" style="left:78.70px;top:790.23px;font-size:15.8px;color:#000;transform:scaleX(0.93);">NTDS Quotas</div><svg style="position:absolute;left:34.5px;top:818.2px;" width="9" height="12" viewBox="0 0 9 12"><path d="M1.2 1 L6.6 6 L1.2 11" fill="none" stroke="#a6a6a6" stroke-width="2"/></svg><svg style="position:absolute;left:53px;top:813.7px;" width="17" height="17" viewBox="0 0 17 17"><path d="M0.5 2.5 h7.5 l1 -1.5 h7.5 v15.5 h-16 z" fill="#f3d386" stroke="#d8b464" stroke-width="1"/><path d="M1 5 h15.5" stroke="#fbe9b8" stroke-width="1.5"/><rect x="11" y="2" width="4" height="1.3" fill="#5c9ee0"/></svg><div class="t" style="left:78.70px;top:812.73px;font-size:15.8px;color:#000;transform:scaleX(0.93);">TPM Devices</div><div style="position:absolute;left:2px;top:874px;width:241px;height:21px;background:#f0f0f0"></div><div style="position:absolute;left:23px;top:874px;width:98px;height:19px;background:#cdcdcd"></div><svg style="position:absolute;left:8px;top:877px;" width="9" height="13" viewBox="0 0 9 13"><path d="M7 1.5 L2.5 6.5 L7 11.5" fill="none" stroke="#606060" stroke-width="2.2"/></svg><svg style="position:absolute;left:227px;top:877px;" width="9" height="13" viewBox="0 0 9 13"><path d="M2 1.5 L6.5 6.5 L2 11.5" fill="none" stroke="#606060" stroke-width="2.2"/></svg></div><div style="position:absolute;left:254px;top:96px;width:1661px;height:897px;overflow:hidden;background:#fff;border:1px solid #828790;box-sizing:border-box"><div style="position:absolute;left:126px;top:2px;width:1px;height:30px;background:#e5e5e5"></div><div style="position:absolute;left:251px;top:2px;width:1px;height:30px;background:#e5e5e5"></div><div style="position:absolute;left:439px;top:2px;width:1px;height:30px;background:#e5e5e5"></div><div class="t" style="left:9.80px;top:6.53px;font-size:15.8px;color:#000;transform:scaleX(0.93);">Name</div><div class="t" style="left:134.20px;top:6.53px;font-size:15.8px;color:#000;transform:scaleX(0.93);">Type</div><div class="t" style="left:259.20px;top:6.53px;font-size:15.8px;color:#000;transform:scaleX(0.93);">Description</div><div style="position:absolute;left:27px;top:56px;width:412px;height:23px;background:#efefef"></div><svg style="position:absolute;left:7px;top:32.5px;" width="21" height="22" viewBox="0 0 21 22"><path d="M0.5 12.5 q0 -1.5 1.5 -1.5 h7 q1.5 0 1.5 1.5 v5 h-10z" fill="#78b45a" stroke="#1e2a18" stroke-width="1"/><path d="M1.5 4 q0 -3.5 4 -3.5 q4 0 4 3.5 v6.5 h-8z" fill="#d8c070" stroke="#2a2418" stroke-width="0.8"/><ellipse cx="5.5" cy="6.5" rx="3.2" ry="4.2" fill="#e8c49a"/><path d="M9.5 15.5 q0 -2 2 -2 h5 q3 0 3.5 3 v3 q0 2 -2 2 h-6.5 q-2 0 -2 -2z" fill="#94c4ec" stroke="#1a2630" stroke-width="1"/><path d="M10 6.5 q0 -3.5 4 -3.5 q4 0 4.5 3.5 v4.5 q0 2 -2 2.5 h-5 q-1.5 -0.5 -1.5 -2.5z" fill="#262626"/><ellipse cx="13.6" cy="9.2" rx="3.3" ry="4.3" fill="#b07c4c"/></svg><div class="t" style="left:29.20px;top:33.53px;font-size:15.8px;color:#000;transform:scaleX(0.93);">Access-Deni...</div><div class="t" style="left:134.70px;top:33.53px;font-size:15.8px;color:#000;transform:scaleX(0.93);">Security Group...</div><div class="t" style="left:259.20px;top:33.53px;font-size:15.8px;color:#000;transform:scaleX(0.93);">Members of this group ...</div><svg style="position:absolute;left:10.5px;top:57.25px;" width="18" height="22" viewBox="0 0 18 22"><path d="M1.5 13.5 q0 -2.5 2.5 -2.5 h6 q3 0 5 3 q1.5 2 1.5 4.5 q0 3 -3 3 h-9 q-3 0 -3 -3z" fill="#3a7cd0" stroke="#173a78" stroke-width="1"/><path d="M2 4 q0 -3.5 3.5 -3.5 h3 q3 0 3 3.5 v6 q-1 2 -4.5 2 q-4 0 -5 -2z" fill="#4a84cc" stroke="#173a78" stroke-width="1"/></svg><div class="t" style="left:29.20px;top:57.28px;font-size:15.8px;color:#000;transform:scaleX(0.93);">ADAudit Plus</div><div class="t" style="left:134.70px;top:57.28px;font-size:15.8px;color:#000;transform:scaleX(0.93);">User</div><div class="t" style="left:259.20px;top:57.28px;font-size:15.8px;color:#000;transform:scaleX(0.93);"></div><svg style="position:absolute;left:7px;top:80.0px;" width="21" height="22" viewBox="0 0 21 22"><path d="M0.5 12.5 q0 -1.5 1.5 -1.5 h7 q1.5 0 1.5 1.5 v5 h-10z" fill="#78b45a" stroke="#1e2a18" stroke-width="1"/><path d="M1.5 4 q0 -3.5 4 -3.5 q4 0 4 3.5 v6.5 h-8z" fill="#d8c070" stroke="#2a2418" stroke-width="0.8"/><ellipse cx="5.5" cy="6.5" rx="3.2" ry="4.2" fill="#e8c49a"/><path d="M9.5 15.5 q0 -2 2 -2 h5 q3 0 3.5 3 v3 q0 2 -2 2 h-6.5 q-2 0 -2 -2z" fill="#94c4ec" stroke="#1a2630" stroke-width="1"/><path d="M10 6.5 q0 -3.5 4 -3.5 q4 0 4.5 3.5 v4.5 q0 2 -2 2.5 h-5 q-1.5 -0.5 -1.5 -2.5z" fill="#262626"/><ellipse cx="13.6" cy="9.2" rx="3.3" ry="4.3" fill="#b07c4c"/></svg><div class="t" style="left:29.20px;top:81.03px;font-size:15.8px;color:#000;transform:scaleX(0.93);">ADAuditPlus...</div><div class="t" style="left:134.70px;top:81.03px;font-size:15.8px;color:#000;transform:scaleX(0.93);">Security Group...</div><div class="t" style="left:259.20px;top:81.03px;font-size:15.8px;color:#000;transform:scaleX(0.93);">ADAudit Plus</div><svg style="position:absolute;left:7px;top:103.75px;" width="21" height="22" viewBox="0 0 21 22"><path d="M0.5 12.5 q0 -1.5 1.5 -1.5 h7 q1.5 0 1.5 1.5 v5 h-10z" fill="#78b45a" stroke="#1e2a18" stroke-width="1"/><path d="M1.5 4 q0 -3.5 4 -3.5 q4 0 4 3.5 v6.5 h-8z" fill="#d8c070" stroke="#2a2418" stroke-width="0.8"/><ellipse cx="5.5" cy="6.5" rx="3.2" ry="4.2" fill="#e8c49a"/><path d="M9.5 15.5 q0 -2 2 -2 h5 q3 0 3.5 3 v3 q0 2 -2 2 h-6.5 q-2 0 -2 -2z" fill="#94c4ec" stroke="#1a2630" stroke-width="1"/><path d="M10 6.5 q0 -3.5 4 -3.5 q4 0 4.5 3.5 v4.5 q0 2 -2 2.5 h-5 q-1.5 -0.5 -1.5 -2.5z" fill="#262626"/><ellipse cx="13.6" cy="9.2" rx="3.3" ry="4.3" fill="#b07c4c"/></svg><div class="t" style="left:29.20px;top:104.78px;font-size:15.8px;color:#000;transform:scaleX(0.93);">ADAuditPlus...</div><div class="t" style="left:134.70px;top:104.78px;font-size:15.8px;color:#000;transform:scaleX(0.93);">Security Group...</div><div class="t" style="left:259.20px;top:104.78px;font-size:15.8px;color:#000;transform:scaleX(0.93);">DoNotDelete</div><svg style="position:absolute;left:10.5px;top:128.5px;" width="18" height="22" viewBox="0 0 18 22"><path d="M1.5 13.5 q0 -2.5 2.5 -2.5 h6 q3 0 5 3 q1.5 2 1.5 4.5 q0 3 -3 3 h-9 q-3 0 -3 -3z" fill="#94c4ec" stroke="#1a2630" stroke-width="1"/><path d="M5 11.5 l1.5 4.5 l1.5 -4.5z" fill="#f4f8fc"/><path d="M1.5 4 q0 -3.5 3.5 -3.5 h3.5 q2.5 0 2.5 3.5 v6 h-1.5 v-4 h-6.5 v4 h-1.5z" fill="#262626"/><ellipse cx="6.2" cy="7" rx="3.6" ry="4.6" fill="#c08a58"/></svg><div class="t" style="left:29.20px;top:128.53px;font-size:15.8px;color:#000;transform:scaleX(0.93);">Administrator</div><div class="t" style="left:134.70px;top:128.53px;font-size:15.8px;color:#000;transform:scaleX(0.93);">User</div><div class="t" style="left:259.20px;top:128.53px;font-size:15.8px;color:#000;transform:scaleX(0.93);">Built-in account for ad...</div><svg style="position:absolute;left:7px;top:151.25px;" width="21" height="22" viewBox="0 0 21 22"><path d="M0.5 12.5 q0 -1.5 1.5 -1.5 h7 q1.5 0 1.5 1.5 v5 h-10z" fill="#78b45a" stroke="#1e2a18" stroke-width="1"/><path d="M1.5 4 q0 -3.5 4 -3.5 q4 0 4 3.5 v6.5 h-8z" fill="#d8c070" stroke="#2a2418" stroke-width="0.8"/><ellipse cx="5.5" cy="6.5" rx="3.2" ry="4.2" fill="#e8c49a"/><path d="M9.5 15.5 q0 -2 2 -2 h5 q3 0 3.5 3 v3 q0 2 -2 2 h-6.5 q-2 0 -2 -2z" fill="#94c4ec" stroke="#1a2630" stroke-width="1"/><path d="M10 6.5 q0 -3.5 4 -3.5 q4 0 4.5 3.5 v4.5 q0 2 -2 2.5 h-5 q-1.5 -0.5 -1.5 -2.5z" fill="#262626"/><ellipse cx="13.6" cy="9.2" rx="3.3" ry="4.3" fill="#b07c4c"/></svg><div class="t" style="left:29.20px;top:152.28px;font-size:15.8px;color:#000;transform:scaleX(0.93);">Allowed RO...</div><div class="t" style="left:134.70px;top:152.28px;font-size:15.8px;color:#000;transform:scaleX(0.93);">Security Group...</div><div class="t" style="left:259.20px;top:152.28px;font-size:15.8px;color:#000;transform:scaleX(0.93);">Members in this group c...</div><svg style="position:absolute;left:10.5px;top:176.0px;" width="18" height="22" viewBox="0 0 18 22"><path d="M1.5 13.5 q0 -2.5 2.5 -2.5 h6 q3 0 5 3 q1.5 2 1.5 4.5 q0 3 -3 3 h-9 q-3 0 -3 -3z" fill="#94c4ec" stroke="#1a2630" stroke-width="1"/><path d="M5 11.5 l1.5 4.5 l1.5 -4.5z" fill="#f4f8fc"/><path d="M1.5 4 q0 -3.5 3.5 -3.5 h3.5 q2.5 0 2.5 3.5 v6 h-1.5 v-4 h-6.5 v4 h-1.5z" fill="#262626"/><ellipse cx="6.2" cy="7" rx="3.6" ry="4.6" fill="#c08a58"/></svg><div class="t" style="left:29.20px;top:176.03px;font-size:15.8px;color:#000;transform:scaleX(0.93);">Blue Kannan</div><div class="t" style="left:134.70px;top:176.03px;font-size:15.8px;color:#000;transform:scaleX(0.93);">User</div><div class="t" style="left:259.20px;top:176.03px;font-size:15.8px;color:#000;transform:scaleX(0.93);"></div><svg style="position:absolute;left:7px;top:198.75px;" width="21" height="22" viewBox="0 0 21 22"><path d="M0.5 12.5 q0 -1.5 1.5 -1.5 h7 q1.5 0 1.5 1.5 v5 h-10z" fill="#78b45a" stroke="#1e2a18" stroke-width="1"/><path d="M1.5 4 q0 -3.5 4 -3.5 q4 0 4 3.5 v6.5 h-8z" fill="#d8c070" stroke="#2a2418" stroke-width="0.8"/><ellipse cx="5.5" cy="6.5" rx="3.2" ry="4.2" fill="#e8c49a"/><path d="M9.5 15.5 q0 -2 2 -2 h5 q3 0 3.5 3 v3 q0 2 -2 2 h-6.5 q-2 0 -2 -2z" fill="#94c4ec" stroke="#1a2630" stroke-width="1"/><path d="M10 6.5 q0 -3.5 4 -3.5 q4 0 4.5 3.5 v4.5 q0 2 -2 2.5 h-5 q-1.5 -0.5 -1.5 -2.5z" fill="#262626"/><ellipse cx="13.6" cy="9.2" rx="3.3" ry="4.3" fill="#b07c4c"/></svg><div class="t" style="left:29.20px;top:199.78px;font-size:15.8px;color:#000;transform:scaleX(0.93);">Cert Publish...</div><div class="t" style="left:134.70px;top:199.78px;font-size:15.8px;color:#000;transform:scaleX(0.93);">Security Group...</div><div class="t" style="left:259.20px;top:199.78px;font-size:15.8px;color:#000;transform:scaleX(0.93);">Members of this group ...</div><svg style="position:absolute;left:7px;top:222.5px;" width="21" height="22" viewBox="0 0 21 22"><path d="M0.5 12.5 q0 -1.5 1.5 -1.5 h7 q1.5 0 1.5 1.5 v5 h-10z" fill="#78b45a" stroke="#1e2a18" stroke-width="1"/><path d="M1.5 4 q0 -3.5 4 -3.5 q4 0 4 3.5 v6.5 h-8z" fill="#d8c070" stroke="#2a2418" stroke-width="0.8"/><ellipse cx="5.5" cy="6.5" rx="3.2" ry="4.2" fill="#e8c49a"/><path d="M9.5 15.5 q0 -2 2 -2 h5 q3 0 3.5 3 v3 q0 2 -2 2 h-6.5 q-2 0 -2 -2z" fill="#94c4ec" stroke="#1a2630" stroke-width="1"/><path d="M10 6.5 q0 -3.5 4 -3.5 q4 0 4.5 3.5 v4.5 q0 2 -2 2.5 h-5 q-1.5 -0.5 -1.5 -2.5z" fill="#262626"/><ellipse cx="13.6" cy="9.2" rx="3.3" ry="4.3" fill="#b07c4c"/></svg><div class="t" style="left:29.20px;top:223.53px;font-size:15.8px;color:#000;transform:scaleX(0.93);">Cloneable D...</div><div class="t" style="left:134.70px;top:223.53px;font-size:15.8px;color:#000;transform:scaleX(0.93);">Security Group...</div><div class="t" style="left:259.20px;top:223.53px;font-size:15.8px;color:#000;transform:scaleX(0.93);">Members of this group ...</div><svg style="position:absolute;left:10.5px;top:793.5px;" width="18" height="22" viewBox="0 0 18 22"><path d="M1.5 13.5 q0 -2.5 2.5 -2.5 h6 q3 0 5 3 q1.5 2 1.5 4.5 q0 3 -3 3 h-9 q-3 0 -3 -3z" fill="#94c4ec" stroke="#1a2630" stroke-width="1"/><path d="M5 11.5 l1.5 4.5 l1.5 -4.5z" fill="#f4f8fc"/><path d="M1.5 4 q0 -3.5 3.5 -3.5 h3.5 q2.5 0 2.5 3.5 v6 h-1.5 v-4 h-6.5 v4 h-1.5z" fill="#262626"/><ellipse cx="6.2" cy="7" rx="3.6" ry="4.6" fill="#c08a58"/></svg><div class="t" style="left:29.20px;top:793.53px;font-size:15.8px;color:#000;transform:scaleX(0.93);">Jack</div><div class="t" style="left:134.70px;top:793.53px;font-size:15.8px;color:#000;transform:scaleX(0.93);">User</div><div class="t" style="left:259.20px;top:793.53px;font-size:15.8px;color:#000;transform:scaleX(0.93);"></div><svg style="position:absolute;left:10.5px;top:817.25px;" width="18" height="22" viewBox="0 0 18 22"><path d="M1.5 13.5 q0 -2.5 2.5 -2.5 h6 q3 0 5 3 q1.5 2 1.5 4.5 q0 3 -3 3 h-9 q-3 0 -3 -3z" fill="#94c4ec" stroke="#1a2630" stroke-width="1"/><path d="M5 11.5 l1.5 4.5 l1.5 -4.5z" fill="#f4f8fc"/><path d="M1.5 4 q0 -3.5 3.5 -3.5 h3.5 q2.5 0 2.5 3.5 v6 h-1.5 v-4 h-6.5 v4 h-1.5z" fill="#262626"/><ellipse cx="6.2" cy="7" rx="3.6" ry="4.6" fill="#c08a58"/></svg><div class="t" style="left:29.20px;top:817.28px;font-size:15.8px;color:#000;transform:scaleX(0.93);">John</div><div class="t" style="left:134.70px;top:817.28px;font-size:15.8px;color:#000;transform:scaleX(0.93);">User</div><div class="t" style="left:259.20px;top:817.28px;font-size:15.8px;color:#000;transform:scaleX(0.93);"></div><svg style="position:absolute;left:10.5px;top:841.0px;" width="18" height="22" viewBox="0 0 18 22"><path d="M1.5 13.5 q0 -2.5 2.5 -2.5 h6 q3 0 5 3 q1.5 2 1.5 4.5 q0 3 -3 3 h-9 q-3 0 -3 -3z" fill="#94c4ec" stroke="#1a2630" stroke-width="1"/><path d="M5 11.5 l1.5 4.5 l1.5 -4.5z" fill="#f4f8fc"/><path d="M1.5 4 q0 -3.5 3.5 -3.5 h3.5 q2.5 0 2.5 3.5 v6 h-1.5 v-4 h-6.5 v4 h-1.5z" fill="#262626"/><ellipse cx="6.2" cy="7" rx="3.6" ry="4.6" fill="#c08a58"/></svg><div class="t" style="left:29.20px;top:841.03px;font-size:15.8px;color:#000;transform:scaleX(0.93);">john smith</div><div class="t" style="left:134.70px;top:841.03px;font-size:15.8px;color:#000;transform:scaleX(0.93);">User</div><div class="t" style="left:259.20px;top:841.03px;font-size:15.8px;color:#000;transform:scaleX(0.93);">Description</div><svg style="position:absolute;left:10.5px;top:864.75px;" width="18" height="22" viewBox="0 0 18 22"><path d="M1.5 13.5 q0 -2.5 2.5 -2.5 h6 q3 0 5 3 q1.5 2 1.5 4.5 q0 3 -3 3 h-9 q-3 0 -3 -3z" fill="#94c4ec" stroke="#1a2630" stroke-width="1"/><path d="M5 11.5 l1.5 4.5 l1.5 -4.5z" fill="#f4f8fc"/><path d="M1.5 4 q0 -3.5 3.5 -3.5 h3.5 q2.5 0 2.5 3.5 v6 h-1.5 v-4 h-6.5 v4 h-1.5z" fill="#262626"/><ellipse cx="6.2" cy="7" rx="3.6" ry="4.6" fill="#c08a58"/></svg><div class="t" style="left:29.20px;top:864.78px;font-size:15.8px;color:#000;transform:scaleX(0.93);">kaviya</div><div class="t" style="left:134.70px;top:864.78px;font-size:15.8px;color:#000;transform:scaleX(0.93);">User</div><div class="t" style="left:259.20px;top:864.78px;font-size:15.8px;color:#000;transform:scaleX(0.93);"></div><svg style="position:absolute;left:7px;top:889.0px;" width="21" height="22" viewBox="0 0 21 22"><path d="M0.5 12.5 q0 -1.5 1.5 -1.5 h7 q1.5 0 1.5 1.5 v5 h-10z" fill="#78b45a" stroke="#1e2a18" stroke-width="1"/><path d="M1.5 4 q0 -3.5 4 -3.5 q4 0 4 3.5 v6.5 h-8z" fill="#d8c070" stroke="#2a2418" stroke-width="0.8"/><ellipse cx="5.5" cy="6.5" rx="3.2" ry="4.2" fill="#e8c49a"/><path d="M9.5 15.5 q0 -2 2 -2 h5 q3 0 3.5 3 v3 q0 2 -2 2 h-6.5 q-2 0 -2 -2z" fill="#94c4ec" stroke="#1a2630" stroke-width="1"/><path d="M10 6.5 q0 -3.5 4 -3.5 q4 0 4.5 3.5 v4.5 q0 2 -2 2.5 h-5 q-1.5 -0.5 -1.5 -2.5z" fill="#262626"/><ellipse cx="13.6" cy="9.2" rx="3.3" ry="4.3" fill="#b07c4c"/></svg><div class="t" style="left:29.20px;top:890.03px;font-size:15.8px;color:#000;transform:scaleX(0.93);">Key Admins</div><div class="t" style="left:134.70px;top:890.03px;font-size:15.8px;color:#000;transform:scaleX(0.93);">Security Group...</div><div class="t" style="left:259.20px;top:890.03px;font-size:15.8px;color:#000;transform:scaleX(0.93);">Members of this group ...</div><div style="position:absolute;left:1639px;top:1px;width:18px;height:894px;background:#f0f0f0"></div><div style="position:absolute;left:1639px;top:24px;width:18px;height:471px;background:#cdcdcd"></div><svg style="position:absolute;left:1641px;top:7px;" width="14" height="10" viewBox="0 0 14 10"><path d="M2 8 L7 3 L12 8" fill="none" stroke="#606060" stroke-width="2"/></svg></div><div style="position:absolute;left:140px;top:333px;width:620px;height:569px;overflow:hidden;background:#f0f0f0;border:1px solid #8a8a8a;box-sizing:border-box"><div style="position:absolute;left:1px;top:1px;width:619px;height:38px;background:#fff"></div><div class="t" style="left:10.20px;top:9.03px;font-size:15.8px;color:#999;transform:scaleX(0.906);">Users Properties</div><div class="t" style="left:408.20px;top:9.03px;font-size:15.8px;color:#999;transform:scaleX(0.93);">?</div><svg style="position:absolute;left:462px;top:12px;" width="14" height="14" viewBox="0 0 14 14"><path d="M1 1 L13 13 M13 1 L1 13" stroke="#8a8a8a" stroke-width="1"/></svg><div style="position:absolute;left:9px;top:73px;width:480px;height:448px;background:#fff;border:1px solid #d9d9d9;box-sizing:border-box"></div><div style="position:absolute;left:11px;top:49px;width:61px;height:24px;background:#f0f0f0;border:1px solid #d9d9d9;border-bottom:none;box-sizing:border-box"></div><div style="position:absolute;left:71px;top:49px;width:53px;height:24px;background:#f0f0f0;border:1px solid #d9d9d9;border-bottom:none;box-sizing:border-box"></div><div style="position:absolute;left:190px;top:49px;width:98px;height:24px;background:#f0f0f0;border:1px solid #d9d9d9;border-bottom:none;box-sizing:border-box"></div><div style="position:absolute;left:123px;top:47px;width:68px;height:31px;background:#fff200"></div><div style="position:absolute;left:128px;top:52px;width:58px;height:21px;background:#fff"></div><div class="t" style="left:15.70px;top:50.98px;font-size:14.5px;color:#000;transform:scaleX(0.91);">General</div><div class="t" style="left:77.70px;top:50.98px;font-size:14.5px;color:#000;transform:scaleX(0.91);">Object</div><div class="t" style="left:131.70px;top:48.98px;font-size:14.5px;color:#000;transform:scaleX(0.91);">Security</div><div class="t" style="left:194.70px;top:51.48px;font-size:14.5px;color:#000;transform:scaleX(0.91);">Attribute Editor</div><div style="position:absolute;left:27px;top:84px;width:401px;height:16px;background:#f0f0f0"></div><div class="t" style="left:26.20px;top:80.48px;font-size:14.5px;color:#000;transform:scaleX(0.91);">Group or user names:</div><div style="position:absolute;left:27px;top:105px;width:446px;height:128px;background:#fff;border:1px solid #828790;box-sizing:border-box"></div><div style="position:absolute;left:55px;top:108px;width:394px;height:21px;background:#efefef"></div><div style="position:absolute;left:28px;top:106px;width:421px;height:127px;overflow:hidden;"><svg style="position:absolute;left:7px;top:3.1000000000000227px;" width="21" height="18" viewBox="0 0 21 18"><path d="M0.5 17 v-4 q0 -2.5 2.5 -2.5 h5 q2.5 0 2.5 2.5 v4z" fill="#74b254" stroke="#2e4a22" stroke-width="0.8"/><path d="M2 5.5 q0 -5 3.5 -5 q3.5 0 3.5 5 v5 h-7z" fill="#dcc480"/><ellipse cx="5.5" cy="6" rx="3" ry="4" fill="#eccaa0"/><path d="M9 17 v-3.5 q0 -2.5 2.5 -2.5 h5.5 q3 0 3 2.5 v3.5z" fill="#8cbce6" stroke="#1e3040" stroke-width="0.8"/><path d="M10 5.5 q0 -5 4.5 -5 q4.5 0 4.5 5 v4 q-1 2 -4.5 2 q-3.5 0 -4.5 -2z" fill="#2a2a2a"/><ellipse cx="14.3" cy="6.8" rx="3.3" ry="4.2" fill="#a87446"/></svg><div class="t" style="left:28.20px;top:1.08px;font-size:14.5px;color:#000;transform:scaleX(0.91);">CREATOR OWNER</div></div><div style="position:absolute;left:28px;top:106px;width:421px;height:127px;overflow:hidden;"><svg style="position:absolute;left:7px;top:24.200000000000045px;" width="21" height="18" viewBox="0 0 21 18"><path d="M0.5 17 v-4 q0 -2.5 2.5 -2.5 h5 q2.5 0 2.5 2.5 v4z" fill="#74b254" stroke="#2e4a22" stroke-width="0.8"/><path d="M2 5.5 q0 -5 3.5 -5 q3.5 0 3.5 5 v5 h-7z" fill="#dcc480"/><ellipse cx="5.5" cy="6" rx="3" ry="4" fill="#eccaa0"/><path d="M9 17 v-3.5 q0 -2.5 2.5 -2.5 h5.5 q3 0 3 2.5 v3.5z" fill="#8cbce6" stroke="#1e3040" stroke-width="0.8"/><path d="M10 5.5 q0 -5 4.5 -5 q4.5 0 4.5 5 v4 q-1 2 -4.5 2 q-3.5 0 -4.5 -2z" fill="#2a2a2a"/><ellipse cx="14.3" cy="6.8" rx="3.3" ry="4.2" fill="#a87446"/></svg><div class="t" style="left:28.20px;top:22.18px;font-size:14.5px;color:#000;transform:scaleX(0.91);">SELF</div></div><div style="position:absolute;left:28px;top:106px;width:421px;height:127px;overflow:hidden;"><svg style="position:absolute;left:7px;top:45.30000000000001px;" width="21" height="18" viewBox="0 0 21 18"><path d="M0.5 17 v-4 q0 -2.5 2.5 -2.5 h5 q2.5 0 2.5 2.5 v4z" fill="#74b254" stroke="#2e4a22" stroke-width="0.8"/><path d="M2 5.5 q0 -5 3.5 -5 q3.5 0 3.5 5 v5 h-7z" fill="#dcc480"/><ellipse cx="5.5" cy="6" rx="3" ry="4" fill="#eccaa0"/><path d="M9 17 v-3.5 q0 -2.5 2.5 -2.5 h5.5 q3 0 3 2.5 v3.5z" fill="#8cbce6" stroke="#1e3040" stroke-width="0.8"/><path d="M10 5.5 q0 -5 4.5 -5 q4.5 0 4.5 5 v4 q-1 2 -4.5 2 q-3.5 0 -4.5 -2z" fill="#2a2a2a"/><ellipse cx="14.3" cy="6.8" rx="3.3" ry="4.2" fill="#a87446"/></svg><div class="t" style="left:28.20px;top:43.28px;font-size:14.5px;color:#000;transform:scaleX(0.91);">Authenticated Users</div></div><div style="position:absolute;left:28px;top:106px;width:421px;height:127px;overflow:hidden;"><svg style="position:absolute;left:7px;top:66.39999999999998px;" width="21" height="18" viewBox="0 0 21 18"><path d="M0.5 17 v-4 q0 -2.5 2.5 -2.5 h5 q2.5 0 2.5 2.5 v4z" fill="#74b254" stroke="#2e4a22" stroke-width="0.8"/><path d="M2 5.5 q0 -5 3.5 -5 q3.5 0 3.5 5 v5 h-7z" fill="#dcc480"/><ellipse cx="5.5" cy="6" rx="3" ry="4" fill="#eccaa0"/><path d="M9 17 v-3.5 q0 -2.5 2.5 -2.5 h5.5 q3 0 3 2.5 v3.5z" fill="#8cbce6" stroke="#1e3040" stroke-width="0.8"/><path d="M10 5.5 q0 -5 4.5 -5 q4.5 0 4.5 5 v4 q-1 2 -4.5 2 q-3.5 0 -4.5 -2z" fill="#2a2a2a"/><ellipse cx="14.3" cy="6.8" rx="3.3" ry="4.2" fill="#a87446"/></svg><div class="t" style="left:28.20px;top:64.38px;font-size:14.5px;color:#000;transform:scaleX(0.91);">SYSTEM</div></div><div style="position:absolute;left:28px;top:106px;width:421px;height:127px;overflow:hidden;"><svg style="position:absolute;left:7px;top:87.5px;" width="21" height="18" viewBox="0 0 21 18"><path d="M0.5 17 v-4 q0 -2.5 2.5 -2.5 h5 q2.5 0 2.5 2.5 v4z" fill="#74b254" stroke="#2e4a22" stroke-width="0.8"/><path d="M2 5.5 q0 -5 3.5 -5 q3.5 0 3.5 5 v5 h-7z" fill="#dcc480"/><ellipse cx="5.5" cy="6" rx="3" ry="4" fill="#eccaa0"/><path d="M9 17 v-3.5 q0 -2.5 2.5 -2.5 h5.5 q3 0 3 2.5 v3.5z" fill="#8cbce6" stroke="#1e3040" stroke-width="0.8"/><path d="M10 5.5 q0 -5 4.5 -5 q4.5 0 4.5 5 v4 q-1 2 -4.5 2 q-3.5 0 -4.5 -2z" fill="#2a2a2a"/><ellipse cx="14.3" cy="6.8" rx="3.3" ry="4.2" fill="#a87446"/></svg><div class="t" style="left:28.20px;top:85.48px;font-size:14.5px;color:#000;transform:scaleX(0.91);">Domain Admins (ADAPWORKSHOP\Domain Admins)</div></div><div style="position:absolute;left:28px;top:106px;width:421px;height:127px;overflow:hidden;"><svg style="position:absolute;left:7px;top:108.60000000000002px;" width="21" height="18" viewBox="0 0 21 18"><path d="M0.5 17 v-4 q0 -2.5 2.5 -2.5 h5 q2.5 0 2.5 2.5 v4z" fill="#74b254" stroke="#2e4a22" stroke-width="0.8"/><path d="M2 5.5 q0 -5 3.5 -5 q3.5 0 3.5 5 v5 h-7z" fill="#dcc480"/><ellipse cx="5.5" cy="6" rx="3" ry="4" fill="#eccaa0"/><path d="M9 17 v-3.5 q0 -2.5 2.5 -2.5 h5.5 q3 0 3 2.5 v3.5z" fill="#8cbce6" stroke="#1e3040" stroke-width="0.8"/><path d="M10 5.5 q0 -5 4.5 -5 q4.5 0 4.5 5 v4 q-1 2 -4.5 2 q-3.5 0 -4.5 -2z" fill="#2a2a2a"/><ellipse cx="14.3" cy="6.8" rx="3.3" ry="4.2" fill="#a87446"/></svg><div class="t" style="left:28.20px;top:106.58px;font-size:14.5px;color:#000;transform:scaleX(0.91);">Enterprise Admins (ADAPWORKSHOP\Enterprise Admins)</div></div><div style="position:absolute;left:449px;top:106px;width:22px;height:127px;background:#f0f0f0"></div><div style="position:absolute;left:451px;top:129px;width:19px;height:32px;background:#cdcdcd"></div><svg style="position:absolute;left:454px;top:114px;" width="12" height="9" viewBox="0 0 12 9"><path d="M1.5 7 L6 2.5 L10.5 7" fill="none" stroke="#505050" stroke-width="1.6"/></svg><svg style="position:absolute;left:454px;top:216px;" width="12" height="9" viewBox="0 0 12 9"><path d="M1.5 2 L6 6.5 L10.5 2" fill="none" stroke="#505050" stroke-width="1.6"/></svg><div style="position:absolute;left:277px;top:242px;width:91px;height:26px;background:#e1e1e1;border:1px solid #adadad;box-sizing:border-box;"></div><div class="t" style="left:303.20px;top:244.98px;font-size:14.5px;color:#000;transform:scaleX(0.91);">Add...</div><div style="position:absolute;left:378px;top:242px;width:92px;height:26px;background:#e1e1e1;border:1px solid #adadad;box-sizing:border-box;"></div><div class="t" style="left:397.20px;top:244.98px;font-size:14.5px;color:#000;transform:scaleX(0.91);">Remove</div><div class="t" style="left:26.60px;top:283.48px;font-size:14.5px;color:#000;transform:scaleX(0.91);">Permissions for CREATOR OWNER</div><div class="t" style="left:333.20px;top:283.48px;font-size:14.5px;color:#000;transform:scaleX(0.91);">Allow</div><div class="t" style="left:409.90px;top:283.48px;font-size:14.5px;color:#000;transform:scaleX(0.91);">Deny</div><div style="position:absolute;left:27px;top:306px;width:446px;height:124px;background:#fff;border:1px solid #828790;box-sizing:border-box"></div><div style="position:absolute;left:28px;top:308px;width:444px;height:121px;overflow:hidden;"><div class="t" style="left:13.60px;top:3.48px;font-size:14.5px;color:#000;transform:scaleX(0.91);">Full control</div><svg style="position:absolute;left:308px;top:5.0px;" width="16" height="16" viewBox="0 0 16 16"><rect x="0.5" y="0.5" width="15" height="15" fill="#fff" stroke="#333" stroke-width="1"/></svg><svg style="position:absolute;left:383px;top:5.0px;" width="16" height="16" viewBox="0 0 16 16"><rect x="0.5" y="0.5" width="15" height="15" fill="#fff" stroke="#333" stroke-width="1"/></svg><div class="t" style="left:13.60px;top:25.88px;font-size:14.5px;color:#000;transform:scaleX(0.91);">Read</div><svg style="position:absolute;left:308px;top:27.399999999999977px;" width="16" height="16" viewBox="0 0 16 16"><rect x="0.5" y="0.5" width="15" height="15" fill="#fff" stroke="#333" stroke-width="1"/></svg><svg style="position:absolute;left:383px;top:27.399999999999977px;" width="16" height="16" viewBox="0 0 16 16"><rect x="0.5" y="0.5" width="15" height="15" fill="#fff" stroke="#333" stroke-width="1"/></svg><div class="t" style="left:13.60px;top:48.28px;font-size:14.5px;color:#000;transform:scaleX(0.91);">Write</div><svg style="position:absolute;left:308px;top:49.799999999999955px;" width="16" height="16" viewBox="0 0 16 16"><rect x="0.5" y="0.5" width="15" height="15" fill="#fff" stroke="#333" stroke-width="1"/></svg><svg style="position:absolute;left:383px;top:49.799999999999955px;" width="16" height="16" viewBox="0 0 16 16"><rect x="0.5" y="0.5" width="15" height="15" fill="#fff" stroke="#333" stroke-width="1"/></svg><div class="t" style="left:13.60px;top:70.68px;font-size:14.5px;color:#000;transform:scaleX(0.91);">Create all child objects</div><svg style="position:absolute;left:308px;top:72.20000000000005px;" width="16" height="16" viewBox="0 0 16 16"><rect x="0.5" y="0.5" width="15" height="15" fill="#fff" stroke="#333" stroke-width="1"/></svg><svg style="position:absolute;left:383px;top:72.20000000000005px;" width="16" height="16" viewBox="0 0 16 16"><rect x="0.5" y="0.5" width="15" height="15" fill="#fff" stroke="#333" stroke-width="1"/></svg><div class="t" style="left:13.60px;top:93.08px;font-size:14.5px;color:#000;transform:scaleX(0.91);">Delete all child objects</div><svg style="position:absolute;left:308px;top:94.60000000000002px;" width="16" height="16" viewBox="0 0 16 16"><rect x="0.5" y="0.5" width="15" height="15" fill="#fff" stroke="#333" stroke-width="1"/></svg><svg style="position:absolute;left:383px;top:94.60000000000002px;" width="16" height="16" viewBox="0 0 16 16"><rect x="0.5" y="0.5" width="15" height="15" fill="#fff" stroke="#333" stroke-width="1"/></svg><svg style="position:absolute;left:308px;top:118px;" width="16" height="16" viewBox="0 0 16 16"><rect x="0.5" y="0.5" width="15" height="15" fill="#fff" stroke="#c0c0c0" stroke-width="1"/></svg><svg style="position:absolute;left:383px;top:118px;" width="16" height="16" viewBox="0 0 16 16"><rect x="0.5" y="0.5" width="15" height="15" fill="#fff" stroke="#c0c0c0" stroke-width="1"/></svg></div><div style="position:absolute;left:451px;top:309px;width:20px;height:119px;background:#f0f0f0"></div><div style="position:absolute;left:451px;top:329px;width:19px;height:67px;background:#cdcdcd"></div><svg style="position:absolute;left:455px;top:314px;" width="12" height="9" viewBox="0 0 12 9"><path d="M1.5 7 L6 2.5 L10.5 7" fill="none" stroke="#505050" stroke-width="1.6"/></svg><svg style="position:absolute;left:455px;top:413px;" width="12" height="9" viewBox="0 0 12 9"><path d="M1.5 2 L6 6.5 L10.5 2" fill="none" stroke="#505050" stroke-width="1.6"/></svg><div class="t" style="left:26.60px;top:436.98px;font-size:14.5px;color:#000;transform:scaleX(0.91);">For special permissions or advanced settings, click</div><div class="t" style="left:26.60px;top:452.98px;font-size:14.5px;color:#000;transform:scaleX(0.91);">Advanced.</div><div style="position:absolute;left:351px;top:429px;width:127px;height:48px;background:#fff200"></div><div style="position:absolute;left:356px;top:434px;width:122px;height:38px;background:#fff"></div><div style="position:absolute;left:360px;top:440px;width:110px;height:26px;background:#e1e1e1;border:1px solid #adadad;box-sizing:border-box;"></div><div class="t" style="left:381.20px;top:441.98px;font-size:14.5px;color:#000;transform:scaleX(0.91);">Advanced</div><div style="position:absolute;left:95px;top:532px;width:91px;height:26px;background:#e1e1e1;border:1px solid #adadad;box-sizing:border-box;"></div><div class="t" style="left:129.60px;top:533.88px;font-size:14.5px;color:#000;transform:scaleX(0.91);">OK</div><div style="position:absolute;left:196px;top:532px;width:92px;height:26px;background:#e1e1e1;border:1px solid #adadad;box-sizing:border-box;"></div><div class="t" style="left:217.20px;top:533.88px;font-size:14.5px;color:#000;transform:scaleX(0.91);">Cancel</div><div style="position:absolute;left:298px;top:532px;width:91px;height:26px;background:#d6d6d6;border:1px solid #c4c4c4;box-sizing:border-box;"></div><div class="t" style="left:325.20px;top:533.88px;font-size:14.5px;color:#a0a0a0;transform:scaleX(0.91);">Apply</div><div style="position:absolute;left:399px;top:532px;width:91px;height:26px;background:#d6d6d6;border:1px solid #c4c4c4;box-sizing:border-box;"></div><div class="t" style="left:430.20px;top:533.88px;font-size:14.5px;color:#a0a0a0;transform:scaleX(0.91);">Help</div></div><div style="position:absolute;left:618px;top:283px;width:300px;height:650px;overflow:hidden;background:#f0f0f0;border:1px solid #8a8a8a;box-sizing:border-box"><div style="position:absolute;left:1px;top:1px;width:300px;height:38px;background:#fff"></div><svg style="position:absolute;left:12px;top:8px;" width="17" height="20" viewBox="0 0 17 20"><rect x="0.5" y="0.5" width="16" height="19" fill="#f7dc86" stroke="#e6c468"/><path d="M13 12 l3.5 2 v5.5 h-3.5z" fill="#f0c85a"/></svg><div class="t" style="left:35.20px;top:9.03px;font-size:15.8px;color:#999;transform:scaleX(0.93);">Advanced Security Settings for Users</div><div style="position:absolute;left:14px;top:52px;width:300px;height:551px;background:#fff;border:1px solid #adadad;box-sizing:border-box"></div><div class="t" style="left:29.40px;top:85.53px;font-size:15.8px;color:#000;transform:scaleX(0.93);">Owner:</div><div style="position:absolute;left:140px;top:89px;width:2px;height:11px;background:#3a2a2a"></div><div style="position:absolute;left:136px;top:130px;width:20px;height:23px;background:#f0f0f0;border-bottom:1px solid #c8c8c8;box-sizing:border-box"></div><div style="position:absolute;left:15px;top:123px;width:121px;height:34px;background:#fff200"></div><div style="position:absolute;left:20px;top:128px;width:111px;height:24px;background:#fff"></div><div class="t" style="left:36.00px;top:127.63px;font-size:15.8px;color:#000;transform:scaleX(0.93);">Permissions</div><div class="t" style="left:29.60px;top:171.43px;font-size:15.8px;color:#000;transform:scaleX(0.93);">For additional information, double-click a permission entry.</div><div class="t" style="left:29.60px;top:204.03px;font-size:15.8px;color:#000;transform:scaleX(0.93);">Permission entries:</div><div style="position:absolute;left:28px;top:233px;width:300px;height:268px;background:#fff;border:1px solid #646464;box-sizing:border-box"></div><div style="position:absolute;left:54px;top:235px;width:1px;height:29px;background:#e5e5e5"></div><div style="position:absolute;left:115px;top:235px;width:1px;height:29px;background:#e5e5e5"></div><div class="t" style="left:61.80px;top:237.63px;font-size:15.8px;color:#000;transform:scaleX(0.93);">Type</div><div class="t" style="left:123.00px;top:237.63px;font-size:15.8px;color:#000;transform:scaleX(0.93);">Principal</div><svg style="position:absolute;left:33px;top:266.6px;" width="21" height="18" viewBox="0 0 21 18"><path d="M0.5 17 v-4 q0 -2.5 2.5 -2.5 h5 q2.5 0 2.5 2.5 v4z" fill="#74b254" stroke="#2e4a22" stroke-width="0.8"/><path d="M2 5.5 q0 -5 3.5 -5 q3.5 0 3.5 5 v5 h-7z" fill="#dcc480"/><ellipse cx="5.5" cy="6" rx="3" ry="4" fill="#eccaa0"/><path d="M9 17 v-3.5 q0 -2.5 2.5 -2.5 h5.5 q3 0 3 2.5 v3.5z" fill="#8cbce6" stroke="#1e3040" stroke-width="0.8"/><path d="M10 5.5 q0 -5 4.5 -5 q4.5 0 4.5 5 v4 q-1 2 -4.5 2 q-3.5 0 -4.5 -2z" fill="#2a2a2a"/><ellipse cx="14.3" cy="6.8" rx="3.3" ry="4.2" fill="#a87446"/></svg><div class="t" style="left:61.80px;top:265.63px;font-size:15.8px;color:#000;transform:scaleX(0.93);">Allow</div><div class="t" style="left:123.00px;top:265.63px;font-size:15.8px;color:#000;transform:scaleX(0.93);">Access</div><svg style="position:absolute;left:33px;top:290.30000000000007px;" width="21" height="18" viewBox="0 0 21 18"><path d="M0.5 17 v-4 q0 -2.5 2.5 -2.5 h5 q2.5 0 2.5 2.5 v4z" fill="#74b254" stroke="#2e4a22" stroke-width="0.8"/><path d="M2 5.5 q0 -5 3.5 -5 q3.5 0 3.5 5 v5 h-7z" fill="#dcc480"/><ellipse cx="5.5" cy="6" rx="3" ry="4" fill="#eccaa0"/><path d="M9 17 v-3.5 q0 -2.5 2.5 -2.5 h5.5 q3 0 3 2.5 v3.5z" fill="#8cbce6" stroke="#1e3040" stroke-width="0.8"/><path d="M10 5.5 q0 -5 4.5 -5 q4.5 0 4.5 5 v4 q-1 2 -4.5 2 q-3.5 0 -4.5 -2z" fill="#2a2a2a"/><ellipse cx="14.3" cy="6.8" rx="3.3" ry="4.2" fill="#a87446"/></svg><div class="t" style="left:61.80px;top:289.33px;font-size:15.8px;color:#000;transform:scaleX(0.93);">Allow</div><div class="t" style="left:123.00px;top:289.33px;font-size:15.8px;color:#000;transform:scaleX(0.93);">Account</div><svg style="position:absolute;left:33px;top:314.0px;" width="21" height="18" viewBox="0 0 21 18"><path d="M0.5 17 v-4 q0 -2.5 2.5 -2.5 h5 q2.5 0 2.5 2.5 v4z" fill="#74b254" stroke="#2e4a22" stroke-width="0.8"/><path d="M2 5.5 q0 -5 3.5 -5 q3.5 0 3.5 5 v5 h-7z" fill="#dcc480"/><ellipse cx="5.5" cy="6" rx="3" ry="4" fill="#eccaa0"/><path d="M9 17 v-3.5 q0 -2.5 2.5 -2.5 h5.5 q3 0 3 2.5 v3.5z" fill="#8cbce6" stroke="#1e3040" stroke-width="0.8"/><path d="M10 5.5 q0 -5 4.5 -5 q4.5 0 4.5 5 v4 q-1 2 -4.5 2 q-3.5 0 -4.5 -2z" fill="#2a2a2a"/><ellipse cx="14.3" cy="6.8" rx="3.3" ry="4.2" fill="#a87446"/></svg><div class="t" style="left:61.80px;top:313.03px;font-size:15.8px;color:#000;transform:scaleX(0.93);">Allow</div><div class="t" style="left:123.00px;top:313.03px;font-size:15.8px;color:#000;transform:scaleX(0.93);">Principal</div><svg style="position:absolute;left:33px;top:337.70000000000005px;" width="21" height="18" viewBox="0 0 21 18"><path d="M0.5 17 v-4 q0 -2.5 2.5 -2.5 h5 q2.5 0 2.5 2.5 v4z" fill="#74b254" stroke="#2e4a22" stroke-width="0.8"/><path d="M2 5.5 q0 -5 3.5 -5 q3.5 0 3.5 5 v5 h-7z" fill="#dcc480"/><ellipse cx="5.5" cy="6" rx="3" ry="4" fill="#eccaa0"/><path d="M9 17 v-3.5 q0 -2.5 2.5 -2.5 h5.5 q3 0 3 2.5 v3.5z" fill="#8cbce6" stroke="#1e3040" stroke-width="0.8"/><path d="M10 5.5 q0 -5 4.5 -5 q4.5 0 4.5 5 v4 q-1 2 -4.5 2 q-3.5 0 -4.5 -2z" fill="#2a2a2a"/><ellipse cx="14.3" cy="6.8" rx="3.3" ry="4.2" fill="#a87446"/></svg><div class="t" style="left:61.80px;top:336.73px;font-size:15.8px;color:#000;transform:scaleX(0.93);">Allow</div><div class="t" style="left:123.00px;top:336.73px;font-size:15.8px;color:#000;transform:scaleX(0.93);">Account</div><svg style="position:absolute;left:33px;top:361.4px;" width="21" height="18" viewBox="0 0 21 18"><path d="M0.5 17 v-4 q0 -2.5 2.5 -2.5 h5 q2.5 0 2.5 2.5 v4z" fill="#74b254" stroke="#2e4a22" stroke-width="0.8"/><path d="M2 5.5 q0 -5 3.5 -5 q3.5 0 3.5 5 v5 h-7z" fill="#dcc480"/><ellipse cx="5.5" cy="6" rx="3" ry="4" fill="#eccaa0"/><path d="M9 17 v-3.5 q0 -2.5 2.5 -2.5 h5.5 q3 0 3 2.5 v3.5z" fill="#8cbce6" stroke="#1e3040" stroke-width="0.8"/><path d="M10 5.5 q0 -5 4.5 -5 q4.5 0 4.5 5 v4 q-1 2 -4.5 2 q-3.5 0 -4.5 -2z" fill="#2a2a2a"/><ellipse cx="14.3" cy="6.8" rx="3.3" ry="4.2" fill="#a87446"/></svg><div class="t" style="left:61.80px;top:360.43px;font-size:15.8px;color:#000;transform:scaleX(0.93);">Allow</div><div class="t" style="left:123.00px;top:360.43px;font-size:15.8px;color:#000;transform:scaleX(0.93);">Domain Admins</div><svg style="position:absolute;left:33px;top:385.1px;" width="21" height="18" viewBox="0 0 21 18"><path d="M0.5 17 v-4 q0 -2.5 2.5 -2.5 h5 q2.5 0 2.5 2.5 v4z" fill="#74b254" stroke="#2e4a22" stroke-width="0.8"/><path d="M2 5.5 q0 -5 3.5 -5 q3.5 0 3.5 5 v5 h-7z" fill="#dcc480"/><ellipse cx="5.5" cy="6" rx="3" ry="4" fill="#eccaa0"/><path d="M9 17 v-3.5 q0 -2.5 2.5 -2.5 h5.5 q3 0 3 2.5 v3.5z" fill="#8cbce6" stroke="#1e3040" stroke-width="0.8"/><path d="M10 5.5 q0 -5 4.5 -5 q4.5 0 4.5 5 v4 q-1 2 -4.5 2 q-3.5 0 -4.5 -2z" fill="#2a2a2a"/><ellipse cx="14.3" cy="6.8" rx="3.3" ry="4.2" fill="#a87446"/></svg><div class="t" style="left:61.80px;top:384.13px;font-size:15.8px;color:#000;transform:scaleX(0.93);">Allow</div><div class="t" style="left:123.00px;top:384.13px;font-size:15.8px;color:#000;transform:scaleX(0.93);">Authenticated</div><svg style="position:absolute;left:33px;top:408.79999999999995px;" width="21" height="18" viewBox="0 0 21 18"><path d="M0.5 17 v-4 q0 -2.5 2.5 -2.5 h5 q2.5 0 2.5 2.5 v4z" fill="#74b254" stroke="#2e4a22" stroke-width="0.8"/><path d="M2 5.5 q0 -5 3.5 -5 q3.5 0 3.5 5 v5 h-7z" fill="#dcc480"/><ellipse cx="5.5" cy="6" rx="3" ry="4" fill="#eccaa0"/><path d="M9 17 v-3.5 q0 -2.5 2.5 -2.5 h5.5 q3 0 3 2.5 v3.5z" fill="#8cbce6" stroke="#1e3040" stroke-width="0.8"/><path d="M10 5.5 q0 -5 4.5 -5 q4.5 0 4.5 5 v4 q-1 2 -4.5 2 q-3.5 0 -4.5 -2z" fill="#2a2a2a"/><ellipse cx="14.3" cy="6.8" rx="3.3" ry="4.2" fill="#a87446"/></svg><div class="t" style="left:61.80px;top:407.83px;font-size:15.8px;color:#000;transform:scaleX(0.93);">Allow</div><div class="t" style="left:123.00px;top:407.83px;font-size:15.8px;color:#000;transform:scaleX(0.93);">SYSTEM</div><svg style="position:absolute;left:33px;top:432.5px;" width="21" height="18" viewBox="0 0 21 18"><path d="M0.5 17 v-4 q0 -2.5 2.5 -2.5 h5 q2.5 0 2.5 2.5 v4z" fill="#74b254" stroke="#2e4a22" stroke-width="0.8"/><path d="M2 5.5 q0 -5 3.5 -5 q3.5 0 3.5 5 v5 h-7z" fill="#dcc480"/><ellipse cx="5.5" cy="6" rx="3" ry="4" fill="#eccaa0"/><path d="M9 17 v-3.5 q0 -2.5 2.5 -2.5 h5.5 q3 0 3 2.5 v3.5z" fill="#8cbce6" stroke="#1e3040" stroke-width="0.8"/><path d="M10 5.5 q0 -5 4.5 -5 q4.5 0 4.5 5 v4 q-1 2 -4.5 2 q-3.5 0 -4.5 -2z" fill="#2a2a2a"/><ellipse cx="14.3" cy="6.8" rx="3.3" ry="4.2" fill="#a87446"/></svg><div class="t" style="left:61.80px;top:431.53px;font-size:15.8px;color:#000;transform:scaleX(0.93);">Allow</div><div class="t" style="left:123.00px;top:431.53px;font-size:15.8px;color:#000;transform:scaleX(0.93);">Pre-Windows</div><svg style="position:absolute;left:33px;top:456.20000000000005px;" width="21" height="18" viewBox="0 0 21 18"><path d="M0.5 17 v-4 q0 -2.5 2.5 -2.5 h5 q2.5 0 2.5 2.5 v4z" fill="#74b254" stroke="#2e4a22" stroke-width="0.8"/><path d="M2 5.5 q0 -5 3.5 -5 q3.5 0 3.5 5 v5 h-7z" fill="#dcc480"/><ellipse cx="5.5" cy="6" rx="3" ry="4" fill="#eccaa0"/><path d="M9 17 v-3.5 q0 -2.5 2.5 -2.5 h5.5 q3 0 3 2.5 v3.5z" fill="#8cbce6" stroke="#1e3040" stroke-width="0.8"/><path d="M10 5.5 q0 -5 4.5 -5 q4.5 0 4.5 5 v4 q-1 2 -4.5 2 q-3.5 0 -4.5 -2z" fill="#2a2a2a"/><ellipse cx="14.3" cy="6.8" rx="3.3" ry="4.2" fill="#a87446"/></svg><div class="t" style="left:61.80px;top:455.23px;font-size:15.8px;color:#000;transform:scaleX(0.93);">Allow</div><div class="t" style="left:123.00px;top:455.23px;font-size:15.8px;color:#000;transform:scaleX(0.93);">Pre-Windows</div><svg style="position:absolute;left:33px;top:479.9px;" width="21" height="18" viewBox="0 0 21 18"><path d="M0.5 17 v-4 q0 -2.5 2.5 -2.5 h5 q2.5 0 2.5 2.5 v4z" fill="#74b254" stroke="#2e4a22" stroke-width="0.8"/><path d="M2 5.5 q0 -5 3.5 -5 q3.5 0 3.5 5 v5 h-7z" fill="#dcc480"/><ellipse cx="5.5" cy="6" rx="3" ry="4" fill="#eccaa0"/><path d="M9 17 v-3.5 q0 -2.5 2.5 -2.5 h5.5 q3 0 3 2.5 v3.5z" fill="#8cbce6" stroke="#1e3040" stroke-width="0.8"/><path d="M10 5.5 q0 -5 4.5 -5 q4.5 0 4.5 5 v4 q-1 2 -4.5 2 q-3.5 0 -4.5 -2z" fill="#2a2a2a"/><ellipse cx="14.3" cy="6.8" rx="3.3" ry="4.2" fill="#a87446"/></svg><div class="t" style="left:61.80px;top:478.93px;font-size:15.8px;color:#000;transform:scaleX(0.93);">Allow</div><div class="t" style="left:123.00px;top:478.93px;font-size:15.8px;color:#000;transform:scaleX(0.93);">Pre-Windows</div><div style="position:absolute;left:20px;top:510px;width:115px;height:42px;background:#fff200"></div><div style="position:absolute;left:25px;top:515px;width:105px;height:32px;background:#fff"></div><div style="position:absolute;left:28px;top:518px;width:95px;height:26px;background:#e1e1e1;border:2px solid #0078d7;box-sizing:border-box"></div><div class="t" style="left:61.20px;top:520.03px;font-size:15.8px;color:#000;transform:scaleX(0.93);">Add</div><div style="position:absolute;left:137px;top:518px;width:100px;height:26px;background:#e1e1e1;border:1px solid #adadad;box-sizing:border-box"></div><div style="position:absolute;left:28px;top:560px;width:200px;height:26px;background:#e1e1e1;border:1px solid #adadad;box-sizing:border-box"></div><div class="t" style="left:48.70px;top:562.53px;font-size:15.8px;color:#000;transform:scaleX(0.93);">Disable inheritance</div></div><div style="position:absolute;left:760px;top:245px;width:1146px;height:741px;overflow:hidden;background:#f0f0f0;border:1px solid #1883d7;box-sizing:border-box"><div style="position:absolute;left:1px;top:1px;width:1144px;height:38px;background:#fff"></div><svg style="position:absolute;left:12px;top:8px;" width="17" height="20" viewBox="0 0 17 20"><rect x="0.5" y="0.5" width="16" height="19" fill="#f7dc86" stroke="#e6c468"/><path d="M13 12 l3.5 2 v5.5 h-3.5z" fill="#f0c85a"/></svg><div class="t" style="left:35.20px;top:9.03px;font-size:15.8px;color:#000;transform:scaleX(0.9);">Permission Entry for Users</div><div style="position:absolute;left:997px;top:18px;width:12px;height:1px;background:#c8c8c8"></div><svg style="position:absolute;left:1052px;top:12px;" width="14" height="14" viewBox="0 0 14 14"><rect x="1.5" y="1.5" width="11" height="11" fill="none" stroke="#000" stroke-width="1.1"/></svg><svg style="position:absolute;left:1108px;top:12px;" width="15" height="15" viewBox="0 0 15 15"><path d="M1 1 L14 14 M14 1 L1 14" stroke="#000" stroke-width="1.1"/></svg><div style="position:absolute;left:1124px;top:40px;width:1px;height:652px;background:#fff"></div><div style="position:absolute;left:1125px;top:40px;width:19px;height:652px;background:#f0f0f0"></div><div style="position:absolute;left:1125px;top:60px;width:19px;height:111px;background:#cdcdcd"></div><svg style="position:absolute;left:1128px;top:45px;" width="12" height="9" viewBox="0 0 12 9"><path d="M1.5 7 L6 2.5 L10.5 7" fill="none" stroke="#606060" stroke-width="2"/></svg><svg style="position:absolute;left:1128px;top:676px;" width="12" height="9" viewBox="0 0 12 9"><path d="M1.5 2 L6 6.5 L10.5 2" fill="none" stroke="#606060" stroke-width="2"/></svg><div style="position:absolute;left:15px;top:52px;width:1095px;height:143px;background:#fff;border:1px solid #adadad;box-sizing:border-box"></div><div style="position:absolute;left:20px;top:67px;width:560px;height:123px;background:#fff200"></div><div style="position:absolute;left:25px;top:72px;width:550px;height:113px;background:#fff"></div><div class="t" style="left:29.20px;top:73.03px;font-size:15.8px;color:#000;transform:scaleX(0.93);">Principal:</div><div class="t" style="left:114.20px;top:73.03px;font-size:15.8px;color:#000;transform:scaleX(0.945);">ADAudit Plus (adauditplus@adapworkshop.com)</div><div class="t" style="left:453.20px;top:73.03px;font-size:15.8px;color:#0066cc;transform:scaleX(0.93);">Select a principal</div><div class="t" style="left:29.20px;top:114.53px;font-size:15.8px;color:#000;transform:scaleX(0.93);">Type:</div><div class="t" style="left:29.20px;top:156.53px;font-size:15.8px;color:#000;transform:scaleX(0.93);">Applies to:</div><div style="position:absolute;left:111px;top:109px;width:350px;height:28px;background:#e1e1e1;border:1px solid #adadad;box-sizing:border-box"></div><div class="t" style="left:115.80px;top:113.03px;font-size:15.8px;color:#000;transform:scaleX(0.93);">Allow</div><svg style="position:absolute;left:443px;top:120px;" width="13" height="8" viewBox="0 0 13 8"><path d="M1 1.5 L6.5 6.5 L12 1.5" fill="none" stroke="#505050" stroke-width="1.4"/></svg><div style="position:absolute;left:111px;top:152px;width:350px;height:28px;background:#e1e1e1;border:1px solid #adadad;box-sizing:border-box"></div><div class="t" style="left:115.80px;top:156.03px;font-size:15.8px;color:#000;transform:scaleX(0.93);">This object and all descendant objects</div><svg style="position:absolute;left:443px;top:163px;" width="13" height="8" viewBox="0 0 13 8"><path d="M1 1.5 L6.5 6.5 L12 1.5" fill="none" stroke="#505050" stroke-width="1.4"/></svg><div style="position:absolute;left:15px;top:218px;width:1095px;height:474px;background:#fff;border:1px solid #adadad;border-bottom:none;box-sizing:border-box"></div><div style="position:absolute;left:0px;top:691px;width:1146px;height:2px;background:#a0a0a0"></div><div style="position:absolute;left:97px;top:504px;width:199px;height:58px;background:#fff200"></div><div style="position:absolute;left:102px;top:509px;width:189px;height:48px;background:#fff"></div><div style="position:absolute;left:16px;top:219px;width:1093px;height:473px;overflow:hidden;"><svg style="position:absolute;left:94px;top:4px;" width="16" height="16" viewBox="0 0 16 16"><rect x="0.5" y="0.5" width="15" height="15" fill="#fff" stroke="#333" stroke-width="1"/></svg><div class="t" style="left:114.60px;top:1.63px;font-size:15.8px;color:#000;transform:scaleX(0.93);">Delete applicationVersion objects</div><svg style="position:absolute;left:554px;top:4px;" width="16" height="16" viewBox="0 0 16 16"><rect x="0.5" y="0.5" width="15" height="15" fill="#fff" stroke="#333" stroke-width="1"/></svg><div class="t" style="left:574.20px;top:1.63px;font-size:15.8px;color:#000;transform:scaleX(0.93);">Delete msKds-ProvRootKey objects</div><svg style="position:absolute;left:94px;top:30px;" width="16" height="16" viewBox="0 0 16 16"><rect x="0.5" y="0.5" width="15" height="15" fill="#fff" stroke="#333" stroke-width="1"/></svg><div class="t" style="left:114.60px;top:27.90px;font-size:15.8px;color:#000;transform:scaleX(0.93);">Create certificationAuthority objects</div><svg style="position:absolute;left:554px;top:30px;" width="16" height="16" viewBox="0 0 16 16"><rect x="0.5" y="0.5" width="15" height="15" fill="#fff" stroke="#333" stroke-width="1"/></svg><div class="t" style="left:574.20px;top:27.90px;font-size:15.8px;color:#000;transform:scaleX(0.93);">Create msKds-ProvServerConfiguration objects</div><svg style="position:absolute;left:94px;top:57px;" width="16" height="16" viewBox="0 0 16 16"><rect x="0.5" y="0.5" width="15" height="15" fill="#fff" stroke="#333" stroke-width="1"/></svg><div class="t" style="left:114.60px;top:54.17px;font-size:15.8px;color:#000;transform:scaleX(0.93);">Delete certificationAuthority objects</div><svg style="position:absolute;left:554px;top:57px;" width="16" height="16" viewBox="0 0 16 16"><rect x="0.5" y="0.5" width="15" height="15" fill="#fff" stroke="#333" stroke-width="1"/></svg><div class="t" style="left:574.20px;top:54.17px;font-size:15.8px;color:#000;transform:scaleX(0.93);">Delete msKds-ProvServerConfiguration objects</div><svg style="position:absolute;left:94px;top:83px;" width="16" height="16" viewBox="0 0 16 16"><rect x="0.5" y="0.5" width="15" height="15" fill="#fff" stroke="#333" stroke-width="1"/></svg><div class="t" style="left:114.60px;top:80.44px;font-size:15.8px;color:#000;transform:scaleX(0.93);">Create Computer objects</div><svg style="position:absolute;left:554px;top:83px;" width="16" height="16" viewBox="0 0 16 16"><rect x="0.5" y="0.5" width="15" height="15" fill="#fff" stroke="#333" stroke-width="1"/></svg><div class="t" style="left:574.20px;top:80.44px;font-size:15.8px;color:#000;transform:scaleX(0.93);">Create MSMQ Queue Alias objects</div><svg style="position:absolute;left:94px;top:109px;" width="16" height="16" viewBox="0 0 16 16"><rect x="0.5" y="0.5" width="15" height="15" fill="#fff" stroke="#333" stroke-width="1"/></svg><div class="t" style="left:114.60px;top:106.71px;font-size:15.8px;color:#000;transform:scaleX(0.93);">Delete Computer objects</div><svg style="position:absolute;left:554px;top:109px;" width="16" height="16" viewBox="0 0 16 16"><rect x="0.5" y="0.5" width="15" height="15" fill="#fff" stroke="#333" stroke-width="1"/></svg><div class="t" style="left:574.20px;top:106.71px;font-size:15.8px;color:#000;transform:scaleX(0.93);">Delete MSMQ Queue Alias objects</div><svg style="position:absolute;left:94px;top:135px;" width="16" height="16" viewBox="0 0 16 16"><rect x="0.5" y="0.5" width="15" height="15" fill="#fff" stroke="#333" stroke-width="1"/></svg><div class="t" style="left:114.60px;top:132.98px;font-size:15.8px;color:#000;transform:scaleX(0.93);">Create Contact objects</div><svg style="position:absolute;left:554px;top:135px;" width="16" height="16" viewBox="0 0 16 16"><rect x="0.5" y="0.5" width="15" height="15" fill="#fff" stroke="#333" stroke-width="1"/></svg><div class="t" style="left:574.20px;top:132.98px;font-size:15.8px;color:#000;transform:scaleX(0.93);">Create ms-net-ieee-80211-GroupPolicy objects</div><svg style="position:absolute;left:94px;top:162px;" width="16" height="16" viewBox="0 0 16 16"><rect x="0.5" y="0.5" width="15" height="15" fill="#fff" stroke="#333" stroke-width="1"/></svg><div class="t" style="left:114.60px;top:159.25px;font-size:15.8px;color:#000;transform:scaleX(0.93);">Delete Contact objects</div><svg style="position:absolute;left:554px;top:162px;" width="16" height="16" viewBox="0 0 16 16"><rect x="0.5" y="0.5" width="15" height="15" fill="#fff" stroke="#333" stroke-width="1"/></svg><div class="t" style="left:574.20px;top:159.25px;font-size:15.8px;color:#000;transform:scaleX(0.93);">Delete ms-net-ieee-80211-GroupPolicy objects</div><svg style="position:absolute;left:94px;top:188px;" width="16" height="16" viewBox="0 0 16 16"><rect x="0.5" y="0.5" width="15" height="15" fill="#fff" stroke="#333" stroke-width="1"/></svg><div class="t" style="left:114.60px;top:185.52px;font-size:15.8px;color:#000;transform:scaleX(0.93);">Create document objects</div><svg style="position:absolute;left:554px;top:188px;" width="16" height="16" viewBox="0 0 16 16"><rect x="0.5" y="0.5" width="15" height="15" fill="#fff" stroke="#333" stroke-width="1"/></svg><div class="t" style="left:574.20px;top:185.52px;font-size:15.8px;color:#000;transform:scaleX(0.93);">Create ms-net-ieee-8023-GroupPolicy objects</div><svg style="position:absolute;left:94px;top:214px;" width="16" height="16" viewBox="0 0 16 16"><rect x="0.5" y="0.5" width="15" height="15" fill="#fff" stroke="#333" stroke-width="1"/></svg><div class="t" style="left:114.60px;top:211.79px;font-size:15.8px;color:#000;transform:scaleX(0.93);">Delete document objects</div><svg style="position:absolute;left:554px;top:214px;" width="16" height="16" viewBox="0 0 16 16"><rect x="0.5" y="0.5" width="15" height="15" fill="#fff" stroke="#333" stroke-width="1"/></svg><div class="t" style="left:574.20px;top:211.79px;font-size:15.8px;color:#000;transform:scaleX(0.93);">Delete ms-net-ieee-8023-GroupPolicy objects</div><svg style="position:absolute;left:94px;top:240px;" width="16" height="16" viewBox="0 0 16 16"><rect x="0.5" y="0.5" width="15" height="15" fill="#fff" stroke="#333" stroke-width="1"/></svg><div class="t" style="left:114.60px;top:238.06px;font-size:15.8px;color:#000;transform:scaleX(0.93);">Create documentSeries objects</div><svg style="position:absolute;left:554px;top:240px;" width="16" height="16" viewBox="0 0 16 16"><rect x="0.5" y="0.5" width="15" height="15" fill="#fff" stroke="#333" stroke-width="1"/></svg><div class="t" style="left:574.20px;top:238.06px;font-size:15.8px;color:#000;transform:scaleX(0.93);">Create msPKI-Enterprise-Oid objects</div><svg style="position:absolute;left:94px;top:267px;" width="16" height="16" viewBox="0 0 16 16"><rect x="0.5" y="0.5" width="15" height="15" fill="#fff" stroke="#333" stroke-width="1"/></svg><div class="t" style="left:114.60px;top:264.33px;font-size:15.8px;color:#000;transform:scaleX(0.93);">Delete documentSeries objects</div><svg style="position:absolute;left:554px;top:267px;" width="16" height="16" viewBox="0 0 16 16"><rect x="0.5" y="0.5" width="15" height="15" fill="#fff" stroke="#333" stroke-width="1"/></svg><div class="t" style="left:574.20px;top:264.33px;font-size:15.8px;color:#000;transform:scaleX(0.93);">Delete msPKI-Enterprise-Oid objects</div><svg style="position:absolute;left:94px;top:293px;" width="16" height="16" viewBox="0 0 16 16"><rect x="0.5" y="0.5" width="15" height="15" fill="#fff" stroke="#333" stroke-width="1"/><path d="M3 8.5 L6.3 11.8 L13 4.5" fill="none" stroke="#333" stroke-width="1.3"/></svg><div class="t" style="left:114.60px;top:290.60px;font-size:15.8px;color:#000;transform:scaleX(0.93);">Create Group objects</div><svg style="position:absolute;left:554px;top:293px;" width="16" height="16" viewBox="0 0 16 16"><rect x="0.5" y="0.5" width="15" height="15" fill="#fff" stroke="#333" stroke-width="1"/></svg><div class="t" style="left:574.20px;top:290.60px;font-size:15.8px;color:#000;transform:scaleX(0.93);">Create msPKI-Key-Recovery-Agent objects</div><svg style="position:absolute;left:94px;top:319px;" width="16" height="16" viewBox="0 0 16 16"><rect x="0.5" y="0.5" width="15" height="15" fill="#fff" stroke="#333" stroke-width="1"/><path d="M3 8.5 L6.3 11.8 L13 4.5" fill="none" stroke="#333" stroke-width="1.3"/></svg><div class="t" style="left:114.60px;top:316.87px;font-size:15.8px;color:#000;transform:scaleX(0.93);">Delete Group objects</div><svg style="position:absolute;left:554px;top:319px;" width="16" height="16" viewBox="0 0 16 16"><rect x="0.5" y="0.5" width="15" height="15" fill="#fff" stroke="#333" stroke-width="1"/></svg><div class="t" style="left:574.20px;top:316.87px;font-size:15.8px;color:#000;transform:scaleX(0.93);">Delete msPKI-Key-Recovery-Agent objects</div><svg style="position:absolute;left:94px;top:346px;" width="16" height="16" viewBox="0 0 16 16"><rect x="0.5" y="0.5" width="15" height="15" fill="#fff" stroke="#333" stroke-width="1"/></svg><div class="t" style="left:114.60px;top:343.14px;font-size:15.8px;color:#000;transform:scaleX(0.93);">Create groupOfUniqueNames objects</div><svg style="position:absolute;left:554px;top:346px;" width="16" height="16" viewBox="0 0 16 16"><rect x="0.5" y="0.5" width="15" height="15" fill="#fff" stroke="#333" stroke-width="1"/></svg><div class="t" style="left:574.20px;top:343.14px;font-size:15.8px;color:#000;transform:scaleX(0.93);">Create msPKI-PrivateKeyRecoveryAgent objects</div><svg style="position:absolute;left:94px;top:372px;" width="16" height="16" viewBox="0 0 16 16"><rect x="0.5" y="0.5" width="15" height="15" fill="#fff" stroke="#333" stroke-width="1"/></svg><div class="t" style="left:114.60px;top:369.41px;font-size:15.8px;color:#000;transform:scaleX(0.93);">Delete groupOfUniqueNames objects</div><svg style="position:absolute;left:554px;top:372px;" width="16" height="16" viewBox="0 0 16 16"><rect x="0.5" y="0.5" width="15" height="15" fill="#fff" stroke="#333" stroke-width="1"/></svg><div class="t" style="left:574.20px;top:369.41px;font-size:15.8px;color:#000;transform:scaleX(0.93);">Delete msPKI-PrivateKeyRecoveryAgent objects</div><svg style="position:absolute;left:94px;top:398px;" width="16" height="16" viewBox="0 0 16 16"><rect x="0.5" y="0.5" width="15" height="15" fill="#fff" stroke="#333" stroke-width="1"/></svg><div class="t" style="left:114.60px;top:395.68px;font-size:15.8px;color:#000;transform:scaleX(0.93);">Create groupPolicyContainer objects</div><svg style="position:absolute;left:554px;top:398px;" width="16" height="16" viewBox="0 0 16 16"><rect x="0.5" y="0.5" width="15" height="15" fill="#fff" stroke="#333" stroke-width="1"/></svg><div class="t" style="left:574.20px;top:395.68px;font-size:15.8px;color:#000;transform:scaleX(0.93);">Create msPrint-ConnectionPolicy objects</div><svg style="position:absolute;left:94px;top:424px;" width="16" height="16" viewBox="0 0 16 16"><rect x="0.5" y="0.5" width="15" height="15" fill="#fff" stroke="#333" stroke-width="1"/></svg><div class="t" style="left:114.60px;top:421.95px;font-size:15.8px;color:#000;transform:scaleX(0.93);">Delete groupPolicyContainer objects</div><svg style="position:absolute;left:554px;top:424px;" width="16" height="16" viewBox="0 0 16 16"><rect x="0.5" y="0.5" width="15" height="15" fill="#fff" stroke="#333" stroke-width="1"/></svg><div class="t" style="left:574.20px;top:421.95px;font-size:15.8px;color:#000;transform:scaleX(0.93);">Delete msPrint-ConnectionPolicy objects</div><svg style="position:absolute;left:94px;top:451px;" width="16" height="16" viewBox="0 0 16 16"><rect x="0.5" y="0.5" width="15" height="15" fill="#fff" stroke="#333" stroke-width="1"/></svg><div class="t" style="left:114.60px;top:448.22px;font-size:15.8px;color:#000;transform:scaleX(0.93);">Create InetOrgPerson objects</div><svg style="position:absolute;left:554px;top:451px;" width="16" height="16" viewBox="0 0 16 16"><rect x="0.5" y="0.5" width="15" height="15" fill="#fff" stroke="#333" stroke-width="1"/></svg><div class="t" style="left:574.20px;top:448.22px;font-size:15.8px;color:#000;transform:scaleX(0.93);">Create msSFU30DomainInfo objects</div></div><div style="position:absolute;left:941px;top:704px;width:88px;height:26px;background:#e1e1e1;border:2px solid #0078d7;box-sizing:border-box"></div><div class="t" style="left:973.20px;top:706.53px;font-size:15.8px;color:#000;transform:scaleX(0.93);">OK</div><div style="position:absolute;left:1041px;top:704px;width:89px;height:26px;background:#e1e1e1;border:1px solid #adadad;box-sizing:border-box"></div><div class="t" style="left:1062.20px;top:706.53px;font-size:15.8px;color:#000;transform:scaleX(0.93);">Cancel</div></div><div class="t" style="left:1555.00px;top:926.84px;font-size:25px;color:rgba(120,120,120,0.55);transform:scaleX(0.99);-webkit-text-stroke:0">Activate Windows</div><div class="t" style="left:1555.00px;top:955.89px;font-size:18.5px;color:rgba(120,120,120,0.55);transform:scaleX(0.97);-webkit-text-stroke:0">Go to Settings to activate Windows.</div></body></html>
